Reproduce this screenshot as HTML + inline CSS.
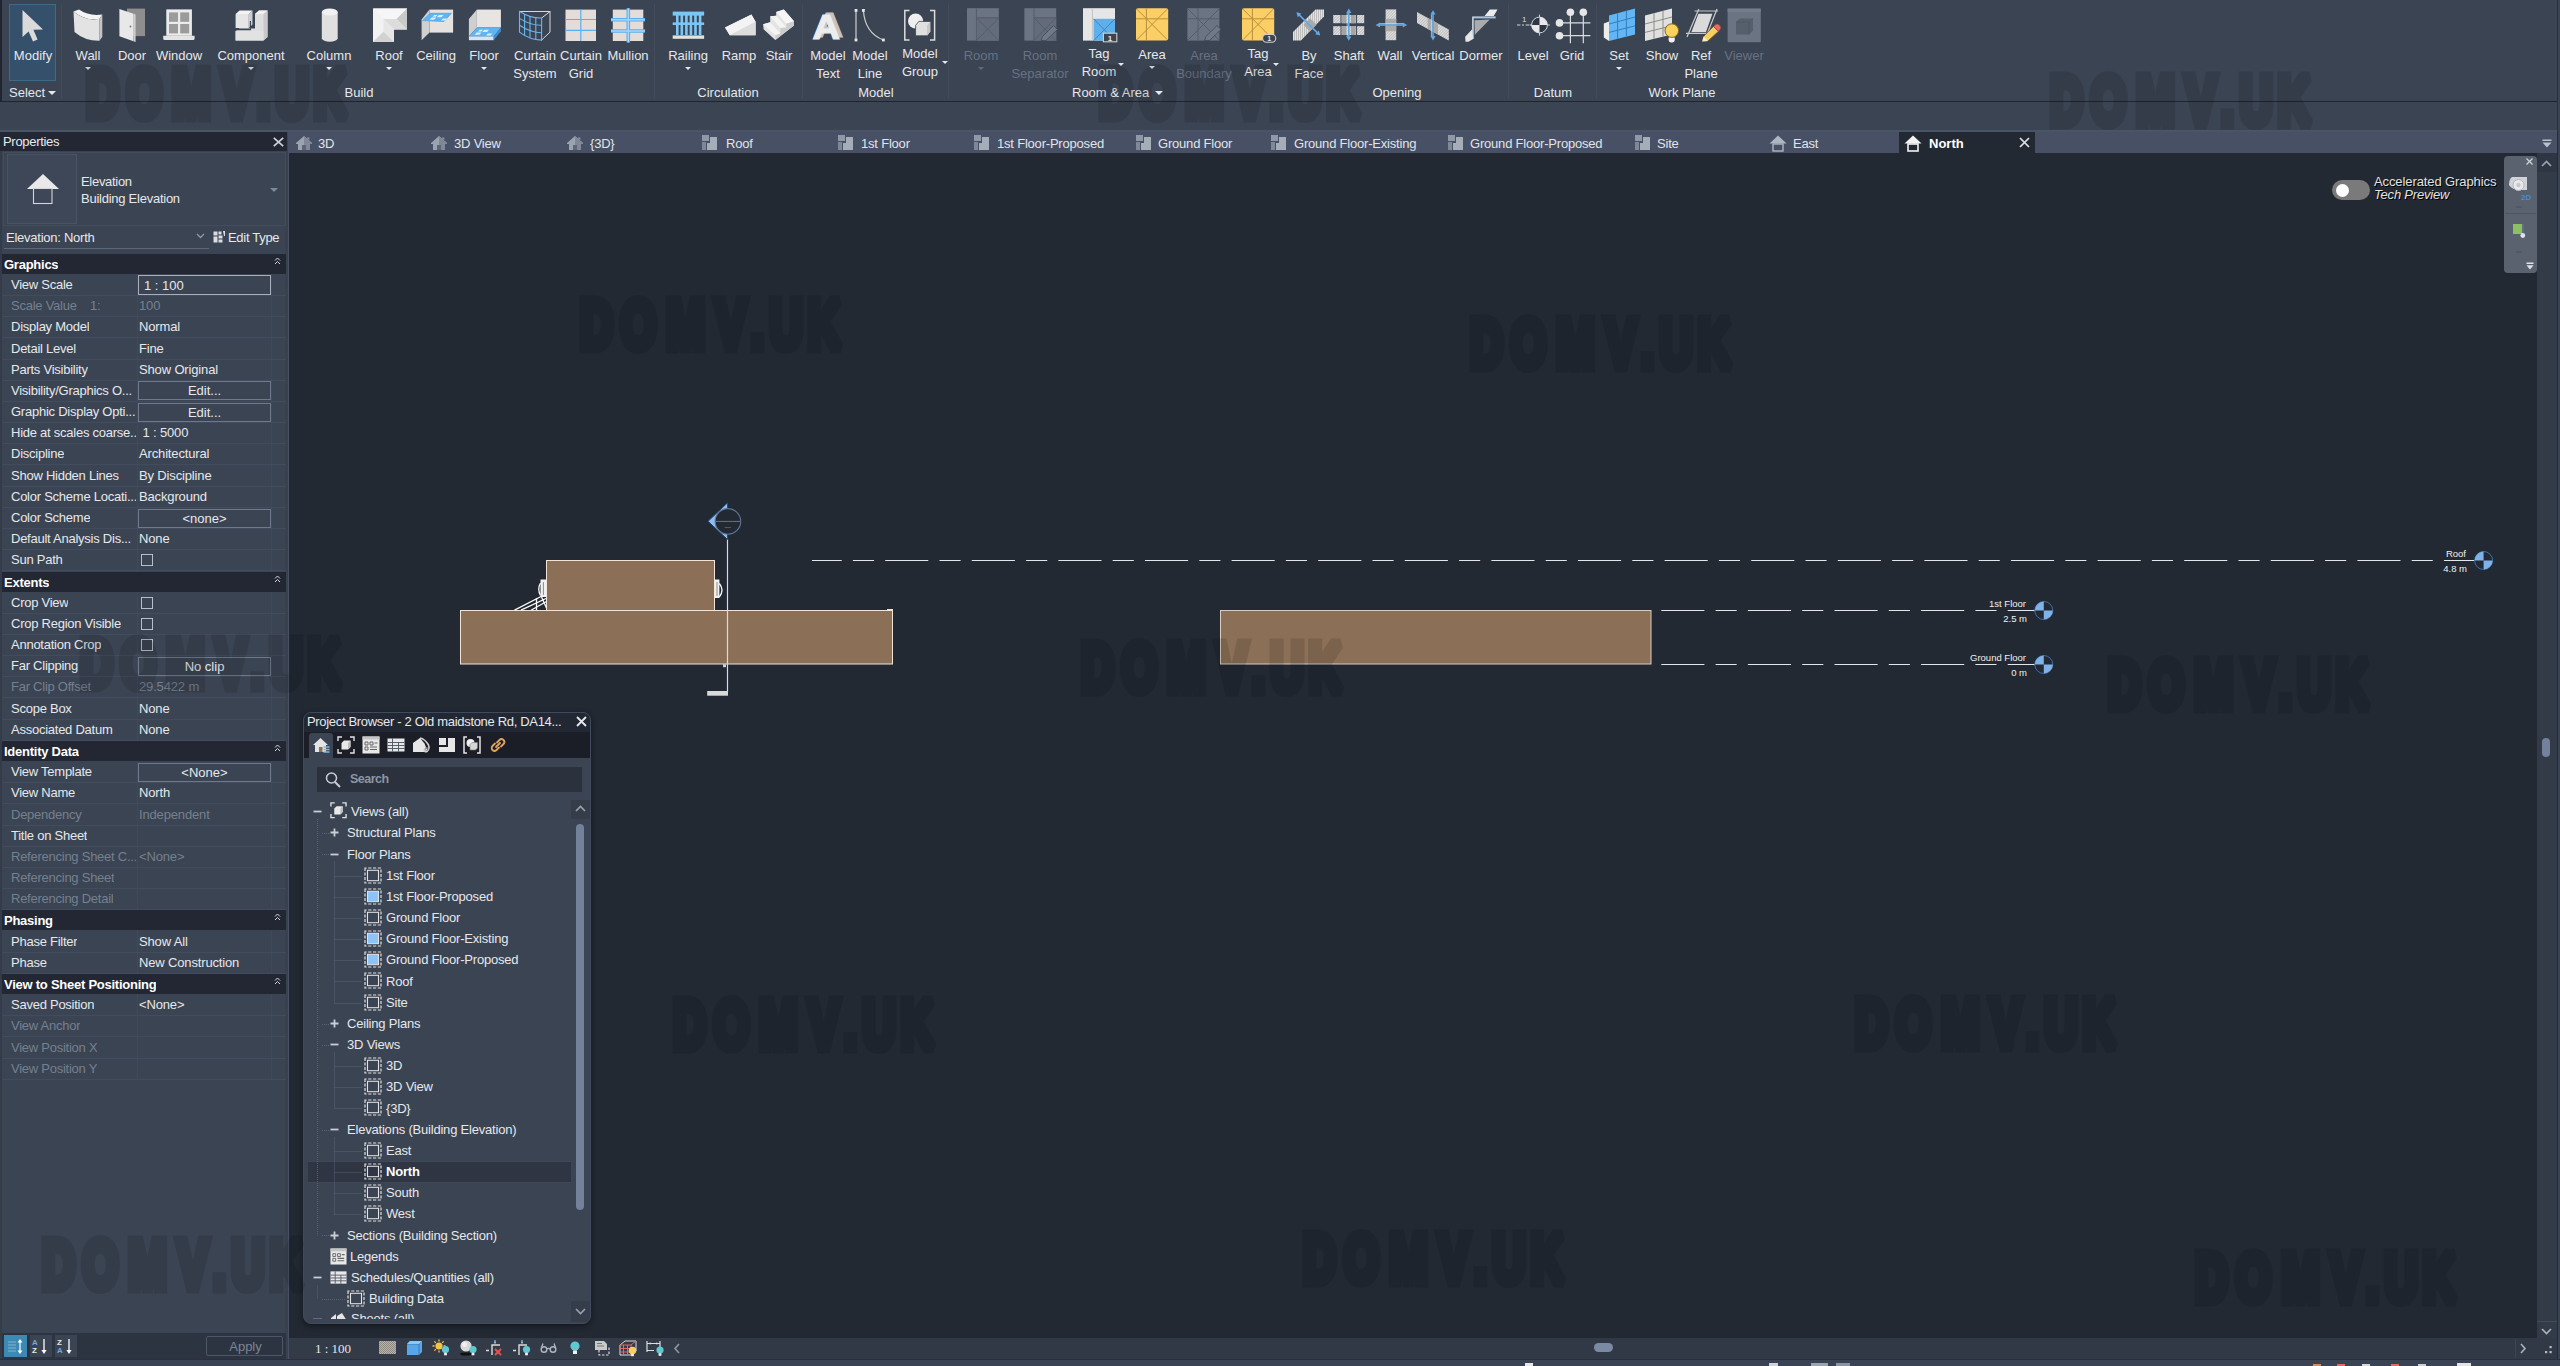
<!DOCTYPE html><html><head><meta charset="utf-8"><title>Revit</title><style>
*{box-sizing:border-box;margin:0;padding:0}
html,body{width:2560px;height:1366px;overflow:hidden;background:#3b4453;font-family:"Liberation Sans","DejaVu Sans",sans-serif;font-size:13px;color:#e6e8ec}
.a{position:absolute}
.t{position:absolute;white-space:nowrap;line-height:18px}
.c{text-align:center}
.dis{color:#75808f}
.rdis{color:#667283}
.wm{position:absolute;font-family:"Liberation Sans","DejaVu Sans",sans-serif;font-weight:700;font-size:60px;line-height:60px;color:rgba(10,12,20,0.17);-webkit-text-stroke:5px rgba(10,12,20,0.0);white-space:nowrap;transform-origin:0 0;letter-spacing:0px;pointer-events:none}
.row{position:absolute;left:2px;width:284px;height:21px}
.hd{position:absolute;left:2px;width:284px;background:#222733;font-weight:700;color:#fff}
.lbl{position:absolute;left:11px;white-space:nowrap;line-height:20px;letter-spacing:-0.25px;max-width:125px;overflow:hidden}
.val{position:absolute;left:139px;white-space:nowrap;line-height:20px;letter-spacing:-0.15px}
.btn{position:absolute;left:138px;width:133px;height:19px;border:1px solid #6e7a8c;text-align:center;line-height:18px}
.cb{position:absolute;left:141px;width:12px;height:12px;border:1px solid #b8bec8}
.tr{position:absolute;white-space:nowrap;line-height:20px}
</style></head><body>
<div class="a" style="left:0;top:0;width:2560px;height:1366px;background:#3b4453"></div>
<div class="a" style="left:0;top:0;width:2px;height:102px;background:#20252f"></div>
<div class="a" style="left:0;top:101px;width:2557px;height:1px;background:#1f242e"></div>
<div class="a" style="left:2557px;top:0;width:1px;height:132px;background:#2a303b"></div>
<div class="a" style="left:0;top:130px;width:2557px;height:2px;background:#4a5468"></div>
<div class="a" style="left:289px;top:132px;width:2268px;height:21px;background:#475065"></div>
<div class="a" style="left:289px;top:153px;width:2256px;height:1185px;background:#222933"></div>
<div class="a" style="left:285px;top:151px;width:4px;height:1209px;background:#39414f"></div><div class="a" style="left:288px;top:132px;width:1px;height:1228px;background:#485164"></div>
<div class="a" style="left:9px;top:4px;width:47px;height:77px;background:#34506a;border:1px solid #3d6a84"></div>
<div class="a" style="left:61px;top:4px;width:1px;height:94px;background:#434c5d"></div>
<div class="a" style="left:654px;top:4px;width:1px;height:94px;background:#434c5d"></div>
<div class="a" style="left:802px;top:4px;width:1px;height:94px;background:#434c5d"></div>
<div class="a" style="left:948px;top:4px;width:1px;height:94px;background:#434c5d"></div>
<div class="a" style="left:1508px;top:4px;width:1px;height:94px;background:#434c5d"></div>
<div class="a" style="left:1596px;top:4px;width:1px;height:94px;background:#434c5d"></div>
<svg class="a" style="left:13px;top:4px;overflow:visible" width="40" height="42" viewBox="13 4 40 42"><path d="M22.5 10V37L28.6 31.4L33 41.6L37.6 39.6L33.4 29.8L43 29.4Z" fill="#dadada"/></svg>
<div class="t c" style="left:-37px;top:47px;width:140px">Modify</div>
<svg class="a" style="left:68px;top:4px;overflow:visible" width="40" height="42" viewBox="68 4 40 42"><path d="M73.5 11.5L79 9.5Q89 16.5 102.3 14.5L99.5 18.8Q86 21.5 73.5 11.5Z" fill="#f4f4f4"/><path d="M73.5 11.5Q86 21.8 99.5 18.8V40.8Q85 41 74.5 32Z" fill="#e3e3e3"/><path d="M99.5 18.8L102.3 14.5V36.8L99.5 40.8Z" fill="#c4c4c4"/></svg>
<div class="t c" style="left:18px;top:47px;width:140px">Wall</div>
<svg class="a" style="left:85.0px;top:67.0px" width="6" height="3" viewBox="0 0 6 3"><path d="M0 0H6L3.0 3Z" fill="#e6e8ec"/></svg>
<svg class="a" style="left:112px;top:4px;overflow:visible" width="40" height="42" viewBox="112 4 40 42"><rect x="127" y="8.6" width="18" height="27.5" fill="#8e8e8e"/><path d="M119.4 9L133.5 13.8V41.2L119.4 36.2Z" fill="#e8e8e8"/><path d="M133.5 13.8L135.6 14.4V42L133.5 41.2Z" fill="#cfcfcf"/><circle cx="130.5" cy="26.5" r="0.9" fill="#777"/></svg>
<div class="t c" style="left:62px;top:47px;width:140px">Door</div>
<svg class="a" style="left:159px;top:4px;overflow:visible" width="40" height="42" viewBox="159 4 40 42"><rect x="166.3" y="9.4" width="25.6" height="26.4" fill="#ebebeb"/><rect x="169" y="12.4" width="9" height="9.4" fill="#9b9b9b"/><rect x="180.2" y="12.4" width="9" height="9.4" fill="#9b9b9b"/><rect x="169" y="24" width="9" height="9.4" fill="#9b9b9b"/><rect x="180.2" y="24" width="9" height="9.4" fill="#9b9b9b"/><path d="M163.2 35.8H194.6V38.5Q194.6 40 193 40H164.8Q163.2 40 163.2 38.5Z" fill="#e4e4e4"/></svg>
<div class="t c" style="left:109px;top:47px;width:140px">Window</div>
<svg class="a" style="left:231px;top:4px;overflow:visible" width="40" height="42" viewBox="231 4 40 42"><path d="M255 14L259 10.6H267.5V37L263.5 40.5H235.6V31L239.5 28.5H255Z" fill="#dedede"/><path d="M255 14L259 10.6H267.5L263.5 14Z" fill="#f1f1f1"/><path d="M263.5 14L267.5 10.6V37L263.5 40.5Z" fill="#c9c9c9"/><path d="M235.6 31H263.5V40.5H235.6Z" fill="#e2e2e2"/><path d="M235.6 14L239.6 10.6H252.5L248.8 14Z" fill="#f3f3f3"/><rect x="235.6" y="14" width="13.2" height="14" fill="#e6e6e6"/><path d="M248.8 14L252.5 10.6V24.6L248.8 28Z" fill="#cdcdcd"/><path d="M236 29.6H250.4V21" fill="none" stroke="#3b4453" stroke-width="1.1"/></svg>
<div class="t c" style="left:181px;top:47px;width:140px">Component</div>
<svg class="a" style="left:248.0px;top:67.0px" width="6" height="3" viewBox="0 0 6 3"><path d="M0 0H6L3.0 3Z" fill="#e6e8ec"/></svg>
<svg class="a" style="left:309px;top:4px;overflow:visible" width="40" height="42" viewBox="309 4 40 42"><path d="M321.8 12V38.5A8 3.7 0 0 0 337.7 38.5V12Z" fill="#e0e0e0"/><ellipse cx="329.75" cy="12" rx="7.95" ry="3.6" fill="#f1f1f1"/></svg>
<div class="t c" style="left:259px;top:47px;width:140px">Column</div>
<svg class="a" style="left:326.0px;top:67.0px" width="6" height="3" viewBox="0 0 6 3"><path d="M0 0H6L3.0 3Z" fill="#e6e8ec"/></svg>
<svg class="a" style="left:369px;top:4px;overflow:visible" width="40" height="42" viewBox="369 4 40 42"><path d="M373 8.5H407V29.5H394V42H373Z" fill="#f2f2f2"/><path d="M373 8.5L383.5 19H407V8.5Z" fill="#f6f6f6"/><path d="M407 8.5L396.5 19L407 29.5Z" fill="#c9c9c9"/><path d="M396.5 19H383.5L394 29.5H407Z" fill="#dcdcdc"/><path d="M383.5 19L394 29.5V42L383.5 31.5Z" fill="#e6e6e6"/><path d="M373 42L383.5 31.5L394 42Z" fill="#d2d2d2"/></svg>
<div class="t c" style="left:319px;top:47px;width:140px">Roof</div>
<svg class="a" style="left:386.0px;top:67.0px" width="6" height="3" viewBox="0 0 6 3"><path d="M0 0H6L3.0 3Z" fill="#e6e8ec"/></svg>
<svg class="a" style="left:416px;top:4px;overflow:visible" width="40" height="42" viewBox="416 4 40 42"><rect x="429.5" y="9.600" width="23.600" height="23" fill="#e6e2e0"/><path d="M421.600 19.500L429.500 9.600V32.600L421.600 40.200Z" fill="#d0d0d0"/><path d="M422.600 20.600L430.200 13.300H451.400L444 21.500Z" fill="#5fb4f2"/><path d="M422.600 20.600L430.200 13.300H451.400L444 21.500Z" fill="none" stroke="#4a9fe0" stroke-width=".7"/><path d="M429.500 19.800L431.800 17.600H436.200L434 19.800ZM436.800 17.200L439 15H443.600L441.400 17.200ZM441 20.400L443 18.400H447.200L445.200 20.400ZM432.500 16.800L434.300 15H437.500L435.700 16.800Z" fill="#d9efff"/></svg>
<div class="t c" style="left:366px;top:47px;width:140px">Ceiling</div>
<svg class="a" style="left:464px;top:4px;overflow:visible" width="40" height="42" viewBox="464 4 40 42"><rect x="476.900" y="9.600" width="24" height="17.900" fill="#e8e4e2"/><path d="M468.900 19L476.900 9.600V27.500L468.900 36.400Z" fill="#cfcfcf"/><path d="M468.900 36.400L476.900 27.500H500.900L493.700 36.400Z" fill="#5fb4f2"/><path d="M468.900 36.400H493.700V40.200H468.900Z" fill="#cfe6fa"/><path d="M493.700 36.400L500.900 27.500V31.300L493.700 40.200Z" fill="#3b8fd4"/><path d="M474.500 34.800L476.700 32.400H481.500L479.300 34.800ZM482.300 32L484.300 29.800H489L487 32ZM486 35.400L487.800 33.400H492.400L490.600 35.400ZM478 31.600L479.600 29.800H483L481.400 31.600Z" fill="#d9efff"/></svg>
<div class="t c" style="left:414px;top:47px;width:140px">Floor</div>
<svg class="a" style="left:481.0px;top:67.0px" width="6" height="3" viewBox="0 0 6 3"><path d="M0 0H6L3.0 3Z" fill="#e6e8ec"/></svg>
<svg class="a" style="left:515px;top:4px;overflow:visible" width="40" height="42" viewBox="515 4 40 42"><g fill="none" stroke="#d9d9d9" stroke-width="1"><path d="M519.500 11.500H550L541.600 18M550 11V32.100L541.600 40.100"/></g><g fill="none" stroke="#6ab6ee" stroke-width="1.100"><path d="M519.500 11.500Q531 18.500 541.600 18V40.100Q530 40 519.500 32.100Z"/><path d="M519.500 18.400Q531 25.600 541.600 25.300M519.500 25.200Q531 32.800 541.600 32.700"/><path d="M524.600 14V35.300M530 16V37.800M535.800 17.300V39.400"/></g></svg>
<div class="t c" style="left:465px;top:47px;width:140px">Curtain</div>
<div class="t c" style="left:465px;top:65px;width:140px">System</div>
<svg class="a" style="left:561px;top:4px;overflow:visible" width="40" height="42" viewBox="561 4 40 42"><rect x="565.500" y="9.600" width="30.500" height="31.400" fill="#e3dcd9"/><path d="M565.500 19.500H596M565.500 30.300H596M580.800 9.600V41" stroke="#58b0f2" stroke-width="1.200"/></svg>
<div class="t c" style="left:511px;top:47px;width:140px">Curtain</div>
<div class="t c" style="left:511px;top:65px;width:140px">Grid</div>
<svg class="a" style="left:608px;top:4px;overflow:visible" width="40" height="42" viewBox="608 4 40 42"><rect x="612.800" y="9.600" width="30.500" height="31.400" fill="#e3dcd9"/><path d="M611 19.700H645M611 31H645M628.300 8.200V42.400" stroke="#58b0f2" stroke-width="3.600"/><path d="M611 19.700H645M611 31H645M628.300 8.200V42.400" stroke="#a9d6f8" stroke-width="1.400"/></svg>
<div class="t c" style="left:558px;top:47px;width:140px">Mullion</div>
<svg class="a" style="left:668px;top:4px;overflow:visible" width="40" height="42" viewBox="668 4 40 42"><rect x="672.7" y="11.6" width="31.4" height="4" fill="#7cc6f6"/><rect x="672.7" y="22.4" width="31.4" height="2.6" fill="#7cc6f6"/><rect x="676.0" y="15" width="2.6" height="20" fill="#7cc6f6"/><rect x="680.5" y="15" width="2.6" height="20" fill="#7cc6f6"/><rect x="685.1" y="15" width="2.6" height="20" fill="#7cc6f6"/><rect x="689.6" y="15" width="2.6" height="20" fill="#7cc6f6"/><rect x="694.2" y="15" width="2.6" height="20" fill="#7cc6f6"/><rect x="698.8" y="15" width="2.6" height="20" fill="#7cc6f6"/><rect x="672.7" y="35.4" width="31.4" height="3.4" fill="#e2e2e2"/></svg>
<div class="t c" style="left:618px;top:47px;width:140px">Railing</div>
<svg class="a" style="left:685.0px;top:67.0px" width="6" height="3" viewBox="0 0 6 3"><path d="M0 0H6L3.0 3Z" fill="#e6e8ec"/></svg>
<svg class="a" style="left:719px;top:4px;overflow:visible" width="40" height="42" viewBox="719 4 40 42"><path d="M725 27.5L751.4 14.6L755.6 21.7V35.2H729.8Z" fill="#e4e4e4"/><path d="M725 27.5L751.4 14.6L755.6 21.7L729.8 35.2Z" fill="#f3f3f3"/><path d="M729.8 35.2L755.6 21.7V35.2Z" fill="#dcdcdc"/></svg>
<div class="t c" style="left:669px;top:47px;width:140px">Ramp</div>
<svg class="a" style="left:759px;top:4px;overflow:visible" width="40" height="42" viewBox="759 4 40 42"><path d="M763.100 24.200L770.200 22.300V16.200L776.200 15.700V12L783.800 9.600L794 21.300V25.600L775.300 40.100L763.600 29.300Z" fill="#e4e4e4"/><path d="M776.200 12L783.800 9.600L794 21.300L786.400 23.700Z" fill="#f6f6f6"/><path d="M770.200 16.200L776.200 15.700L786.400 27.400L780.400 27.900Z" fill="#f4f4f4"/><path d="M763.100 24.200L770.200 22.300L780.400 33.600L775.300 35.300Z" fill="#f4f4f4"/><path d="M794 21.300V25.600L775.300 40.100V35.300L780.400 33.600V27.900L786.400 27.400V23.700Z" fill="#cdcdcd"/></svg>
<div class="t c" style="left:709px;top:47px;width:140px">Stair</div>
<svg class="a" style="left:808px;top:4px;overflow:visible" width="40" height="42" viewBox="808 4 40 42"><text x="0" y="0" font-family="Liberation Sans, sans-serif" font-weight="700" font-size="34.500" text-anchor="middle" fill="#c4c4c4" stroke="#c4c4c4" stroke-width="1.200" transform="translate(829.400 37.200) scale(1.1 1)">A</text><text x="0" y="0" font-family="Liberation Sans, sans-serif" font-weight="700" font-size="34.500" text-anchor="middle" fill="#ededed" stroke="#ededed" stroke-width="1.200" transform="translate(826.200 38.700) scale(1.1 1)">A</text></svg>
<div class="t c" style="left:758px;top:47px;width:140px">Model</div>
<div class="t c" style="left:758px;top:65px;width:140px">Text</div>
<svg class="a" style="left:850px;top:4px;overflow:visible" width="40" height="42" viewBox="850 4 40 42"><path d="M856 10.5V40M863.4 10.5Q865 33 883.4 40" fill="none" stroke="#cfcfcf" stroke-width="1.2"/><rect x="854.6" y="9" width="2.8" height="2.8" fill="#e6e6e6"/><rect x="854.6" y="38.6" width="2.8" height="2.8" fill="#e6e6e6"/><rect x="862" y="9" width="2.8" height="2.8" fill="#e6e6e6"/><rect x="882" y="38.6" width="2.8" height="2.8" fill="#e6e6e6"/></svg>
<div class="t c" style="left:800px;top:47px;width:140px">Model</div>
<div class="t c" style="left:800px;top:65px;width:140px">Line</div>
<svg class="a" style="left:900px;top:4px;overflow:visible" width="40" height="42" viewBox="900 4 40 42"><path d="M909.5 10.6H904.8V40H909.5M930 10.6H934.6V40H930" fill="none" stroke="#dcdcdc" stroke-width="1.5"/><circle cx="915.6" cy="21" r="7.6" fill="#efefef"/><path d="M915.6 25.4L918.8 21.4H930.4V31.8L927 35.8H915.6Z" fill="#e0e0e0" stroke="#3b4453" stroke-width=".8"/><path d="M927 25.4L930.4 21.4V31.8L927 35.8Z" fill="#c8c8c8"/></svg>
<div class="t c" style="left:850px;top:45px;width:140px">Model</div>
<div class="t c" style="left:850px;top:63px;width:140px">Group</div>
<svg class="a" style="left:942.0px;top:60.5px" width="6" height="3" viewBox="0 0 6 3"><path d="M0 0H6L3.0 3Z" fill="#e6e8ec"/></svg>
<svg class="a" style="left:961px;top:4px;overflow:visible" width="40" height="42" viewBox="961 4 40 42"><rect x="967" y="8.2" width="31.8" height="32.4" fill="#6a7483"/><rect x="976.4" y="17.8" width="22.4" height="22.8" fill="#636c7a"/><path d="M976.4 17.8L998.8 40.6M998.8 17.8L976.4 40.6M976.4 8.2V40.6M976.4 17.8H998.8" stroke="#545d6b" stroke-width="1" fill="none"/></svg>
<div class="t c rdis" style="left:911px;top:47px;width:140px">Room</div>
<svg class="a" style="left:978.0px;top:67.0px" width="6" height="3" viewBox="0 0 6 3"><path d="M0 0H6L3.0 3Z" fill="#5f6b7c"/></svg>
<svg class="a" style="left:1020px;top:4px;overflow:visible" width="40" height="42" viewBox="1020 4 40 42"><rect x="1024.4" y="8.2" width="31.8" height="32.4" fill="#6a7483"/><rect x="1034" y="17.8" width="22.2" height="22.8" fill="#636c7a"/><path d="M1034 17.8L1056 40.6M1056 17.8L1034 40.6M1034 8.2V40.6M1034 17.8H1056" stroke="#545d6b" stroke-width="1" fill="none"/><path d="M1041 40.5L1042.5 36.5L1053.5 25.5L1057.5 29.5L1046 40.5Z" fill="#6f7988" stroke="#3b4453" stroke-width=".7"/></svg>
<div class="t c rdis" style="left:970px;top:47px;width:140px">Room</div>
<div class="t c rdis" style="left:970px;top:65px;width:140px">Separator</div>
<svg class="a" style="left:1079px;top:4px;overflow:visible" width="40" height="42" viewBox="1079 4 40 42"><rect x="1083" y="8.2" width="32" height="32.4" fill="#e6e6e6"/><rect x="1093.6" y="18.8" width="21.4" height="21.8" fill="#5db0ec"/><path d="M1092.4 8.2V40.6" stroke="#c2c2c2" stroke-width="1"/><path d="M1093.6 18.8L1115 40.6M1115 18.8L1093.6 40.6" stroke="#3f86bf" stroke-width="1" fill="none"/><rect x="1103.4" y="33.2" width="13.4" height="8.6" fill="#3b4453" stroke="#cfcfcf" stroke-width="1.1"/><text x="1110.1" y="40.8" font-family="Liberation Sans, sans-serif" font-weight="700" font-size="8" text-anchor="middle" fill="#e6e6e6">1</text></svg>
<div class="t c" style="left:1029px;top:45px;width:140px">Tag</div>
<div class="t c" style="left:1029px;top:63px;width:140px">Room</div>
<svg class="a" style="left:1118.0px;top:62.5px" width="6" height="3" viewBox="0 0 6 3"><path d="M0 0H6L3.0 3Z" fill="#e6e8ec"/></svg>
<svg class="a" style="left:1132px;top:4px;overflow:visible" width="40" height="42" viewBox="1132 4 40 42"><rect x="1136" y="8.2" width="32.2" height="32.4" rx="2" fill="#fcce66"/><path d="M1137 9.2L1167.2 39.6M1167.2 9.2L1137 39.6M1146.4 8.2V40.6M1136 18.8H1168.2" stroke="#b8903c" stroke-width="1" fill="none"/></svg>
<div class="t c" style="left:1082px;top:46px;width:140px">Area</div>
<svg class="a" style="left:1149.0px;top:66.0px" width="6" height="3" viewBox="0 0 6 3"><path d="M0 0H6L3.0 3Z" fill="#e6e8ec"/></svg>
<svg class="a" style="left:1184px;top:4px;overflow:visible" width="40" height="42" viewBox="1184 4 40 42"><rect x="1187.4" y="8.2" width="32" height="32.4" fill="#6a7483"/><path d="M1188 9L1219 40M1219 9L1188 40M1198 8.2V40.6M1187.4 18.8H1219.4" stroke="#545d6b" stroke-width="1" fill="none"/><path d="M1204.5 40.5L1206 36.5L1217 25.5L1221 29.5L1209.5 40.5Z" fill="#6f7988" stroke="#3b4453" stroke-width=".7"/></svg>
<div class="t c rdis" style="left:1134px;top:47px;width:140px">Area</div>
<div class="t c rdis" style="left:1134px;top:65px;width:140px">Boundary</div>
<svg class="a" style="left:1238px;top:4px;overflow:visible" width="40" height="42" viewBox="1238 4 40 42"><rect x="1242" y="8.2" width="32.2" height="32.4" rx="2" fill="#fcce66"/><path d="M1243 9.2L1273.2 39.6M1273.2 9.2L1243 39.6M1252.4 8.2V40.6M1242 18.8H1274.2" stroke="#b8903c" stroke-width="1" fill="none"/><rect x="1262.6" y="34.4" width="13.2" height="7.8" rx="3.9" fill="#3b4453" stroke="#cfcfcf" stroke-width="1.1"/><text x="1269.2" y="41" font-family="Liberation Sans, sans-serif" font-weight="700" font-size="7" text-anchor="middle" fill="#e6e6e6">1</text></svg>
<div class="t c" style="left:1188px;top:45px;width:140px">Tag</div>
<div class="t c" style="left:1188px;top:63px;width:140px">Area</div>
<svg class="a" style="left:1273.0px;top:62.5px" width="6" height="3" viewBox="0 0 6 3"><path d="M0 0H6L3.0 3Z" fill="#e6e8ec"/></svg>
<svg class="a" style="left:1289px;top:4px;overflow:visible" width="40" height="42" viewBox="1289 4 40 42"><defs><pattern id="h1" width="2" height="2" patternUnits="userSpaceOnUse" patternTransform="rotate(0)"><rect width="2" height="2" fill="#e2e2e2"/><rect width="1" height="2" fill="#bdbdbd"/></pattern></defs><path d="M1293 32L1315.5 9.4H1324V16.5L1301 40.6H1293Z" fill="url(#h1)"/><path d="M1303.5 21.5L1310 15L1316.6 21.6L1310 28.2Z" fill="#a9a9a9" transform="translate(0 3.2)"/><path d="M1297.6 13.4L1319 34.4" stroke="#62a8e4" stroke-width="1.6"/><path d="M1296.4 12.2L1301.4 13.6L1297.8 17.2ZM1320.2 35.6L1315.2 34.2L1318.8 30.6Z" fill="#62a8e4"/></svg>
<div class="t c" style="left:1239px;top:47px;width:140px">By</div>
<div class="t c" style="left:1239px;top:65px;width:140px">Face</div>
<svg class="a" style="left:1329px;top:4px;overflow:visible" width="40" height="42" viewBox="1329 4 40 42"><defs><pattern id="h2" width="2" height="2" patternUnits="userSpaceOnUse" patternTransform="rotate(45)"><rect width="2" height="2" fill="#e2e2e2"/><rect width="1" height="2" fill="#bdbdbd"/></pattern></defs><rect x="1333.2" y="15" width="31" height="8.2" fill="url(#h2)"/><rect x="1333.2" y="26.2" width="31" height="8.8" fill="url(#h2)"/><rect x="1342" y="15" width="4.6" height="8.2" fill="#a4a4a4"/><rect x="1351" y="15" width="4.6" height="8.2" fill="#a4a4a4"/><rect x="1342" y="26.2" width="4.6" height="8.8" fill="#a4a4a4"/><rect x="1351" y="26.2" width="4.6" height="8.8" fill="#a4a4a4"/><path d="M1341 15V35M1356.6 15V35" stroke="#3b4453" stroke-width="1"/><path d="M1348.8 11V38.6" stroke="#62a8e4" stroke-width="1.6"/><path d="M1348.8 8.6L1351.4 13H1346.2ZM1348.8 40.8L1351.4 36.4H1346.2Z" fill="#62a8e4"/><path d="M1347.2 13V36.6" stroke="#cfe6f8" stroke-width=".7"/></svg>
<div class="t c" style="left:1279px;top:47px;width:140px">Shaft</div>
<svg class="a" style="left:1370px;top:4px;overflow:visible" width="40" height="42" viewBox="1370 4 40 42"><defs><pattern id="h3" width="2" height="2" patternUnits="userSpaceOnUse" patternTransform="rotate(45)"><rect width="2" height="2" fill="#e2e2e2"/><rect width="1" height="2" fill="#bdbdbd"/></pattern></defs><rect x="1385.6" y="9.4" width="10.6" height="30.8" fill="url(#h3)"/><rect x="1385.6" y="18.8" width="10.6" height="12.4" fill="#a9a9a9"/><path d="M1378 25H1405" stroke="#62a8e4" stroke-width="1.6"/><path d="M1375.6 25L1380 22.4V27.6ZM1407.2 25L1402.8 22.4V27.6Z" fill="#62a8e4"/><path d="M1380 23.6H1403" stroke="#cfe6f8" stroke-width=".7"/></svg>
<div class="t c" style="left:1320px;top:47px;width:140px">Wall</div>
<svg class="a" style="left:1413px;top:4px;overflow:visible" width="40" height="42" viewBox="1413 4 40 42"><defs><pattern id="h4" width="2" height="2" patternUnits="userSpaceOnUse" patternTransform="rotate(45)"><rect width="2" height="2" fill="#e2e2e2"/><rect width="1" height="2" fill="#bdbdbd"/></pattern></defs><path d="M1417 12L1448.8 29.5V40.4L1417 23Z" fill="url(#h4)"/><path d="M1427.6 17.8L1438 23.6V34.4L1427.6 28.8Z" fill="#a9a9a9"/><path d="M1433 12.6V38" stroke="#62a8e4" stroke-width="1.6"/><path d="M1433 10.2L1435.6 14.6H1430.4ZM1433 40.4L1435.6 36H1430.4Z" fill="#62a8e4"/><path d="M1431.4 14.6V36" stroke="#cfe6f8" stroke-width=".7"/></svg>
<div class="t c" style="left:1363px;top:47px;width:140px">Vertical</div>
<svg class="a" style="left:1461px;top:4px;overflow:visible" width="40" height="42" viewBox="1461 4 40 42"><defs><pattern id="h5" width="2" height="2" patternUnits="userSpaceOnUse" patternTransform="rotate(45)"><rect width="2" height="2" fill="#e2e2e2"/><rect width="1" height="2" fill="#bdbdbd"/></pattern></defs><path d="M1465.200 36.800L1472 29.500L1473.100 39L1468.400 41.700H1465.500Z" fill="#e6e6e6"/><path d="M1484.600 15.900L1489.800 9.500H1497.500L1493.700 15.900Z" fill="#ececec"/><path d="M1474.500 20.200L1489.800 19.600L1474.800 34.800Z" fill="#a9acad"/><path d="M1473.100 39V17.400H1495.600" fill="none" stroke="#dfe8f2" stroke-width="1.800"/><path d="M1473.600 39V17.900H1495.600" fill="none" stroke="#5a9fda" stroke-width=".8"/></svg>
<div class="t c" style="left:1411px;top:47px;width:140px">Dormer</div>
<svg class="a" style="left:1513px;top:4px;overflow:visible" width="40" height="42" viewBox="1513 4 40 42"><text x="1524.200" y="22" font-family="Liberation Sans, sans-serif" font-size="8" text-anchor="middle" fill="#dcdcdc">1</text><path d="M1517 25H1531" stroke="#d4d4d4" stroke-width="1.100" stroke-dasharray="3.400 1.600 2 1.600"/><path d="M1529.500 25H1549.800M1539.500 14.600V35.600" stroke="#cfd2d6" stroke-width="1"/><circle cx="1539.500" cy="25" r="7.900" fill="#2f3744" stroke="#cfd2d6" stroke-width="1"/><path d="M1539.500 25V17.100A7.900 7.900 0 0 1 1547.400 25ZM1539.500 25V32.900A7.900 7.900 0 0 1 1531.600 25Z" fill="#e8e8ea"/></svg>
<div class="t c" style="left:1463px;top:47px;width:140px">Level</div>
<svg class="a" style="left:1552px;top:4px;overflow:visible" width="40" height="42" viewBox="1552 4 40 42"><path d="M1570.400 12V43.200M1583.300 12V43.200M1559.500 22.900H1590.400M1559.500 35.700H1590.400" stroke="#dcdde0" stroke-width="1.200" fill="none"/><circle cx="1570.400" cy="12.200" r="3.800" fill="#e6e6e8"/><circle cx="1583.300" cy="12.200" r="3.800" fill="#e6e6e8"/><circle cx="1559.500" cy="22.900" r="3.800" fill="#e6e6e8"/><circle cx="1559.500" cy="35.700" r="3.800" fill="#e6e6e8"/></svg>
<div class="t c" style="left:1502px;top:47px;width:140px">Grid</div>
<svg class="a" style="left:1599px;top:4px;overflow:visible" width="40" height="42" viewBox="1599 4 40 42"><path d="M1603.8 23.4L1609 21.4V41L1603.8 37.6Z" fill="#ececec"/><path d="M1609 15.6L1635 8.4V34.4L1609 41Z" fill="#62b6f4"/><path d="M1609 24L1635 17M1609 32.4L1635 25.8M1617.6 13.2V38.8M1626.4 10.8V36.6" stroke="#2f7fc0" stroke-width="1" fill="none"/></svg>
<div class="t c" style="left:1549px;top:47px;width:140px">Set</div>
<svg class="a" style="left:1616.0px;top:67.0px" width="6" height="3" viewBox="0 0 6 3"><path d="M0 0H6L3.0 3Z" fill="#e6e8ec"/></svg>
<svg class="a" style="left:1642px;top:4px;overflow:visible" width="40" height="42" viewBox="1642 4 40 42"><path d="M1645 15.6L1672 8.4V34.4L1645 41Z" fill="#e0e0e0"/><path d="M1645 24L1672 17M1645 32.4L1672 25.8M1654 13.2V38.8M1663 10.8V36.6" stroke="#8c8c84" stroke-width="1" fill="none"/><rect x="1668.6" y="36" width="6.2" height="6.4" rx="2.4" fill="#f2f2f2"/><circle cx="1671.8" cy="30.6" r="6.8" fill="#fcd25e" stroke="#7d6224" stroke-width="1"/></svg>
<div class="t c" style="left:1592px;top:47px;width:140px">Show</div>
<svg class="a" style="left:1681px;top:4px;overflow:visible" width="40" height="42" viewBox="1681 4 40 42"><path d="M1691.4 32L1698.4 13.8H1712.4L1706 32Z" fill="#dadada"/><path d="M1686 33.4H1708M1694.6 11H1718M1687 37L1698.8 9M1706 37L1717 9" stroke="#c9c9c9" stroke-width="1.2" fill="none"/><path d="M1702.2 41.6L1703.6 36.4L1713.4 26.4L1718.4 31.4L1708 41Z" fill="#f6cf62" stroke="#6a5320" stroke-width=".8"/><path d="M1713.4 26.4L1714.6 25.2A3.5 3.5 0 0 1 1719.6 30.2L1718.4 31.4Z" fill="#ee6470" stroke="#6a5320" stroke-width=".6"/><path d="M1702.2 41.6L1703.6 36.4L1708 41Z" fill="#f2ece0"/></svg>
<div class="t c" style="left:1631px;top:47px;width:140px">Ref</div>
<div class="t c" style="left:1631px;top:65px;width:140px">Plane</div>
<svg class="a" style="left:1724px;top:4px;overflow:visible" width="40" height="42" viewBox="1724 4 40 42"><rect x="1727.6" y="8.6" width="33.2" height="33.6" fill="#6a7483"/><rect x="1727.6" y="8.6" width="33.2" height="3.4" fill="#727c8b"/><path d="M1736 22L1740 18.6H1753V30.6L1749 34.6H1736Z" fill="#565f6c"/><path d="M1736 22H1749V34.6M1749 22L1753 18.6" stroke="#4c5561" stroke-width=".8" fill="none"/></svg>
<div class="t c rdis" style="left:1674px;top:47px;width:140px">Viewer</div>
<div class="t c" style="left:289px;top:84px;width:140px">Build</div>
<div class="t c" style="left:658px;top:84px;width:140px">Circulation</div>
<div class="t c" style="left:806px;top:84px;width:140px">Model</div>
<div class="t c" style="left:1327px;top:84px;width:140px">Opening</div>
<div class="t c" style="left:1483px;top:84px;width:140px">Datum</div>
<div class="t c" style="left:1612px;top:84px;width:140px">Work Plane</div>
<div class="t" style="left:9px;top:84px">Select</div>
<svg class="a" style="left:47.5px;top:90.5px" width="8" height="4" viewBox="0 0 8 4"><path d="M0 0H8L4.0 4Z" fill="#e6e8ec"/></svg>
<div class="t" style="left:1072px;top:84px">Room &amp; Area</div>
<svg class="a" style="left:1154.5px;top:90.5px" width="8" height="4" viewBox="0 0 8 4"><path d="M0 0H8L4.0 4Z" fill="#e6e8ec"/></svg>
<svg class="a" style="left:295px;top:134px" width="18" height="18" viewBox="0 0 18 18"><path d="M1 9L9 2L17 9V10H15V16H3V10H1Z" fill="#9aa3b0"/><path d="M9 2L17 9V10H15V16H9Z" fill="#7f8896"/><rect x="7" y="11" width="4" height="5" fill="#5d6675"/><path d="M12 3.5h2.4V6L12 4.4Z" fill="#8a93a0"/></svg>
<div class="t" style="left:318px;top:135px;color:#e1e4e9;letter-spacing:-0.2px">3D</div>
<svg class="a" style="left:430px;top:134px" width="18" height="18" viewBox="0 0 18 18"><path d="M1 9L9 2L17 9V10H15V16H3V10H1Z" fill="#9aa3b0"/><path d="M9 2L17 9V10H15V16H9Z" fill="#7f8896"/><rect x="7" y="11" width="4" height="5" fill="#5d6675"/><path d="M12 3.5h2.4V6L12 4.4Z" fill="#8a93a0"/></svg>
<div class="t" style="left:454px;top:135px;color:#e1e4e9;letter-spacing:-0.2px">3D View</div>
<svg class="a" style="left:566px;top:134px" width="18" height="18" viewBox="0 0 18 18"><path d="M1 9L9 2L17 9V10H15V16H3V10H1Z" fill="#9aa3b0"/><path d="M9 2L17 9V10H15V16H9Z" fill="#7f8896"/><rect x="7" y="11" width="4" height="5" fill="#5d6675"/><path d="M12 3.5h2.4V6L12 4.4Z" fill="#8a93a0"/></svg>
<div class="t" style="left:590px;top:135px;color:#e1e4e9;letter-spacing:-0.2px">{3D}</div>
<svg class="a" style="left:701px;top:134px" width="18" height="18" viewBox="0 0 18 18"><path d="M1 1H8V7H1Z" fill="#8f98a6"/><path d="M9 3H16V16H6V9H9Z" fill="#a5adb9"/><path d="M1 8H5V16H1Z" fill="#7f8896"/></svg>
<div class="t" style="left:726px;top:135px;color:#e1e4e9;letter-spacing:-0.2px">Roof</div>
<svg class="a" style="left:837px;top:134px" width="18" height="18" viewBox="0 0 18 18"><path d="M1 1H8V7H1Z" fill="#8f98a6"/><path d="M9 3H16V16H6V9H9Z" fill="#a5adb9"/><path d="M1 8H5V16H1Z" fill="#7f8896"/></svg>
<div class="t" style="left:861px;top:135px;color:#e1e4e9;letter-spacing:-0.2px">1st Floor</div>
<svg class="a" style="left:973px;top:134px" width="18" height="18" viewBox="0 0 18 18"><path d="M1 1H8V7H1Z" fill="#8f98a6"/><path d="M9 3H16V16H6V9H9Z" fill="#a5adb9"/><path d="M1 8H5V16H1Z" fill="#7f8896"/></svg>
<div class="t" style="left:997px;top:135px;color:#e1e4e9;letter-spacing:-0.2px">1st Floor-Proposed</div>
<svg class="a" style="left:1135px;top:134px" width="18" height="18" viewBox="0 0 18 18"><path d="M1 1H8V7H1Z" fill="#8f98a6"/><path d="M9 3H16V16H6V9H9Z" fill="#a5adb9"/><path d="M1 8H5V16H1Z" fill="#7f8896"/></svg>
<div class="t" style="left:1158px;top:135px;color:#e1e4e9;letter-spacing:-0.2px">Ground Floor</div>
<svg class="a" style="left:1270px;top:134px" width="18" height="18" viewBox="0 0 18 18"><path d="M1 1H8V7H1Z" fill="#8f98a6"/><path d="M9 3H16V16H6V9H9Z" fill="#a5adb9"/><path d="M1 8H5V16H1Z" fill="#7f8896"/></svg>
<div class="t" style="left:1294px;top:135px;color:#e1e4e9;letter-spacing:-0.2px">Ground Floor-Existing</div>
<svg class="a" style="left:1447px;top:134px" width="18" height="18" viewBox="0 0 18 18"><path d="M1 1H8V7H1Z" fill="#8f98a6"/><path d="M9 3H16V16H6V9H9Z" fill="#a5adb9"/><path d="M1 8H5V16H1Z" fill="#7f8896"/></svg>
<div class="t" style="left:1470px;top:135px;color:#e1e4e9;letter-spacing:-0.2px">Ground Floor-Proposed</div>
<svg class="a" style="left:1634px;top:134px" width="18" height="18" viewBox="0 0 18 18"><path d="M1 1H8V7H1Z" fill="#8f98a6"/><path d="M9 3H16V16H6V9H9Z" fill="#a5adb9"/><path d="M1 8H5V16H1Z" fill="#7f8896"/></svg>
<div class="t" style="left:1657px;top:135px;color:#e1e4e9;letter-spacing:-0.2px">Site</div>
<svg class="a" style="left:1769px;top:134px" width="18" height="18" viewBox="0 0 18 18"><path d="M0.5 9.5L9 1.5L17.500 9.500H14.5V9.5H3.5Z" fill="#aeb6c1"/><rect x="4" y="10" width="10" height="7" fill="none" stroke="#aeb6c1" stroke-width="1.4"/></svg>
<div class="t" style="left:1793px;top:135px;color:#e1e4e9;letter-spacing:-0.2px">East</div>
<div class="a" style="left:1899px;top:132px;width:136px;height:21px;background:#222933"></div>
<svg class="a" style="left:1904px;top:134px" width="18" height="18" viewBox="0 0 18 18"><path d="M0.5 9.5L9 1.5L17.500 9.500H14.5V9.5H3.5Z" fill="#f2f2f2"/><rect x="4" y="10" width="10" height="7" fill="none" stroke="#f2f2f2" stroke-width="1.6"/></svg>
<div class="t" style="left:1929px;top:135px;color:#fff;font-weight:700">North</div>
<svg class="a" style="left:2019px;top:137px" width="11" height="11" viewBox="0 0 11 11"><path d="M1 1L10 10M10 1L1 10" stroke="#dfe2e7" stroke-width="1.7"/></svg>
<svg class="a" style="left:2542px;top:139px" width="10" height="9" viewBox="0 0 10 9"><path d="M0.5 0.5H9.5V2H0.5ZM0.5 3.6H9.5L5 8.4Z" fill="#b9c0cb"/></svg>
<div class="a" style="left:0;top:132px;width:287px;height:19px;background:#222733"></div>
<div class="t" style="left:3px;top:132.500px;color:#e8eaee;letter-spacing:-0.3px">Properties</div>
<svg class="a" style="left:273px;top:137px" width="11" height="10" viewBox="0 0 11 10"><path d="M0.8 0.8L10.2 9.2M10.2 0.8L0.8 9.2" stroke="#cfd2d8" stroke-width="1.7"/></svg>
<div class="a" style="left:0;top:151px;width:2px;height:1209px;background:#343b49"></div>
<div class="a" style="left:3px;top:152px;width:283px;height:74px;border:1px solid #434c5d"></div>
<div class="a" style="left:7px;top:154px;width:70px;height:70px;border:1px solid #4a5366;background:#3e4757"></div>
<svg class="a" style="left:26px;top:172px" width="34" height="34" viewBox="0 0 34 34"><path d="M1 17L17 2L33 17H26V17H8Z" fill="#e9e9e9"/><rect x="7.500" y="16.500" width="18.500" height="15" fill="none" stroke="#d6d6d6" stroke-width="1.1"/></svg>
<div class="t" style="left:81px;top:173px;letter-spacing:-0.3px">Elevation</div>
<div class="t" style="left:81px;top:190px;letter-spacing:-0.25px">Building Elevation</div>
<svg class="a" style="left:269.5px;top:188.0px" width="8" height="4" viewBox="0 0 8 4"><path d="M0 0H8L4.0 4Z" fill="#7f8898"/></svg>
<div class="t" style="left:6px;top:229px;letter-spacing:-0.25px">Elevation: North</div>
<svg class="a" style="left:196px;top:233px" width="9" height="6" viewBox="0 0 9 6"><path d="M1 1L4.500 4.500L8 1" fill="none" stroke="#8e97a6" stroke-width="1.3"/></svg>
<div class="a" style="left:4px;top:248px;width:205px;height:1px;background:#5b6678"></div>
<svg class="a" style="left:213px;top:231px" width="12" height="12" viewBox="0 0 12 12"><path d="M0.5 0.5h4v4h-4zM5.500 0.5h3v3h-3zM0.5 5.500h4v6h-4zM5.500 4.500h4v3h-4zM5.500 8.500h4v3h-4zM10 0h2v5h-1z" fill="#d9dce1"/></svg>
<div class="t" style="left:228px;top:229px;letter-spacing:-0.3px">Edit Type</div>
<div class="a" style="left:137px;top:274px;width:1px;height:806px;background:#434c5e;opacity:.7"></div>
<div class="a" style="left:271px;top:274px;width:1px;height:806px;background:#434c5e;opacity:.7"></div>
<div class="hd" style="top:253.8px;height:20px"><div class="lbl" style="left:2px;top:1px;max-width:280px">Graphics</div></div>
<svg class="a" style="left:274px;top:256.8px" width="7" height="8" viewBox="0 0 7 8"><path d="M1 3.500L3.500 1L6 3.500M1 7L3.500 4.500L6 7" fill="none" stroke="#d5d9df" stroke-width="1"/></svg>
<div class="row" style="top:275.0px;border-bottom:1px solid #434c5e"></div>
<div class="lbl" style="top:275.0px">View Scale</div>
<div class="btn" style="top:274.7px;height:20.5px;line-height:20px;text-align:left;padding-left:5px;border-color:#a9b0bc">1 : 100</div>
<div class="row" style="top:296.2px;border-bottom:1px solid #434c5e"></div>
<div class="lbl dis" style="top:296.2px">Scale Value &nbsp;&nbsp; 1:</div>
<div class="val dis" style="top:296.2px">100</div>
<div class="row" style="top:317.3px;border-bottom:1px solid #434c5e"></div>
<div class="lbl" style="top:317.3px">Display Model</div>
<div class="val" style="top:317.3px">Normal</div>
<div class="row" style="top:338.5px;border-bottom:1px solid #434c5e"></div>
<div class="lbl" style="top:338.5px">Detail Level</div>
<div class="val" style="top:338.5px">Fine</div>
<div class="row" style="top:359.7px;border-bottom:1px solid #434c5e"></div>
<div class="lbl" style="top:359.7px">Parts Visibility</div>
<div class="val" style="top:359.7px">Show Original</div>
<div class="row" style="top:380.9px;border-bottom:1px solid #434c5e"></div>
<div class="lbl" style="top:380.9px">Visibility/Graphics O...</div>
<div class="btn" style="top:381.4px">Edit...</div>
<div class="row" style="top:402.1px;border-bottom:1px solid #434c5e"></div>
<div class="lbl" style="top:402.1px">Graphic Display Opti...</div>
<div class="btn" style="top:402.6px">Edit...</div>
<div class="row" style="top:423.2px;border-bottom:1px solid #434c5e"></div>
<div class="lbl" style="top:423.2px">Hide at scales coarse...</div>
<div class="val" style="top:423.2px">&nbsp;1 : 5000</div>
<div class="row" style="top:444.4px;border-bottom:1px solid #434c5e"></div>
<div class="lbl" style="top:444.4px">Discipline</div>
<div class="val" style="top:444.4px">Architectural</div>
<div class="row" style="top:465.6px;border-bottom:1px solid #434c5e"></div>
<div class="lbl" style="top:465.6px">Show Hidden Lines</div>
<div class="val" style="top:465.6px">By Discipline</div>
<div class="row" style="top:486.8px;border-bottom:1px solid #434c5e"></div>
<div class="lbl" style="top:486.8px">Color Scheme Locati...</div>
<div class="val" style="top:486.8px">Background</div>
<div class="row" style="top:508.0px;border-bottom:1px solid #434c5e"></div>
<div class="lbl" style="top:508.0px">Color Scheme</div>
<div class="btn" style="top:508.5px">&lt;none&gt;</div>
<div class="row" style="top:529.1px;border-bottom:1px solid #434c5e"></div>
<div class="lbl" style="top:529.1px">Default Analysis Dis...</div>
<div class="val" style="top:529.1px">None</div>
<div class="row" style="top:550.3px;border-bottom:1px solid #434c5e"></div>
<div class="lbl" style="top:550.3px">Sun Path</div>
<div class="cb" style="top:554.3px"></div>
<div class="hd" style="top:571.5px;height:20px"><div class="lbl" style="left:2px;top:1px;max-width:280px">Extents</div></div>
<svg class="a" style="left:274px;top:574.5px" width="7" height="8" viewBox="0 0 7 8"><path d="M1 3.500L3.500 1L6 3.500M1 7L3.500 4.500L6 7" fill="none" stroke="#d5d9df" stroke-width="1"/></svg>
<div class="row" style="top:592.7px;border-bottom:1px solid #434c5e"></div>
<div class="lbl" style="top:592.7px">Crop View</div>
<div class="cb" style="top:596.7px"></div>
<div class="row" style="top:613.9px;border-bottom:1px solid #434c5e"></div>
<div class="lbl" style="top:613.9px">Crop Region Visible</div>
<div class="cb" style="top:617.9px"></div>
<div class="row" style="top:635.0px;border-bottom:1px solid #434c5e"></div>
<div class="lbl" style="top:635.0px">Annotation Crop</div>
<div class="cb" style="top:639.0px"></div>
<div class="row" style="top:656.2px;border-bottom:1px solid #434c5e"></div>
<div class="lbl" style="top:656.2px">Far Clipping</div>
<div class="btn" style="top:656.7px">No clip</div>
<div class="row" style="top:677.4px;border-bottom:1px solid #434c5e"></div>
<div class="lbl dis" style="top:677.4px">Far Clip Offset</div>
<div class="val dis" style="top:677.4px">29.5422 m</div>
<div class="row" style="top:698.6px;border-bottom:1px solid #434c5e"></div>
<div class="lbl" style="top:698.6px">Scope Box</div>
<div class="val" style="top:698.6px">None</div>
<div class="row" style="top:719.8px;border-bottom:1px solid #434c5e"></div>
<div class="lbl" style="top:719.8px">Associated Datum</div>
<div class="val" style="top:719.8px">None</div>
<div class="hd" style="top:740.9px;height:20px"><div class="lbl" style="left:2px;top:1px;max-width:280px">Identity Data</div></div>
<svg class="a" style="left:274px;top:743.9px" width="7" height="8" viewBox="0 0 7 8"><path d="M1 3.500L3.500 1L6 3.500M1 7L3.500 4.500L6 7" fill="none" stroke="#d5d9df" stroke-width="1"/></svg>
<div class="row" style="top:762.1px;border-bottom:1px solid #434c5e"></div>
<div class="lbl" style="top:762.1px">View Template</div>
<div class="btn" style="top:762.6px">&lt;None&gt;</div>
<div class="row" style="top:783.3px;border-bottom:1px solid #434c5e"></div>
<div class="lbl" style="top:783.3px">View Name</div>
<div class="val" style="top:783.3px">North</div>
<div class="row" style="top:804.5px;border-bottom:1px solid #434c5e"></div>
<div class="lbl dis" style="top:804.5px">Dependency</div>
<div class="val dis" style="top:804.5px">Independent</div>
<div class="row" style="top:825.7px;border-bottom:1px solid #434c5e"></div>
<div class="lbl" style="top:825.7px">Title on Sheet</div>
<div class="row" style="top:846.8px;border-bottom:1px solid #434c5e"></div>
<div class="lbl dis" style="top:846.8px">Referencing Sheet C...</div>
<div class="val dis" style="top:846.8px">&lt;None&gt;</div>
<div class="row" style="top:868.0px;border-bottom:1px solid #434c5e"></div>
<div class="lbl dis" style="top:868.0px">Referencing Sheet</div>
<div class="row" style="top:889.2px;border-bottom:1px solid #434c5e"></div>
<div class="lbl dis" style="top:889.2px">Referencing Detail</div>
<div class="hd" style="top:910.4px;height:20px"><div class="lbl" style="left:2px;top:1px;max-width:280px">Phasing</div></div>
<svg class="a" style="left:274px;top:913.4px" width="7" height="8" viewBox="0 0 7 8"><path d="M1 3.500L3.500 1L6 3.500M1 7L3.500 4.500L6 7" fill="none" stroke="#d5d9df" stroke-width="1"/></svg>
<div class="row" style="top:931.6px;border-bottom:1px solid #434c5e"></div>
<div class="lbl" style="top:931.6px">Phase Filter</div>
<div class="val" style="top:931.6px">Show All</div>
<div class="row" style="top:952.7px;border-bottom:1px solid #434c5e"></div>
<div class="lbl" style="top:952.7px">Phase</div>
<div class="val" style="top:952.7px">New Construction</div>
<div class="hd" style="top:973.9px;height:20px"><div class="lbl" style="left:2px;top:1px;max-width:280px">View to Sheet Positioning</div></div>
<svg class="a" style="left:274px;top:976.9px" width="7" height="8" viewBox="0 0 7 8"><path d="M1 3.500L3.500 1L6 3.500M1 7L3.500 4.500L6 7" fill="none" stroke="#d5d9df" stroke-width="1"/></svg>
<div class="row" style="top:995.1px;border-bottom:1px solid #434c5e"></div>
<div class="lbl" style="top:995.1px">Saved Position</div>
<div class="val" style="top:995.1px">&lt;None&gt;</div>
<div class="row" style="top:1016.3px;border-bottom:1px solid #434c5e"></div>
<div class="lbl dis" style="top:1016.3px">View Anchor</div>
<div class="row" style="top:1037.5px;border-bottom:1px solid #434c5e"></div>
<div class="lbl dis" style="top:1037.5px">View Position X</div>
<div class="row" style="top:1058.6px;border-bottom:1px solid #434c5e"></div>
<div class="lbl dis" style="top:1058.6px">View Position Y</div>
<div class="a" style="left:2px;top:1333px;width:284px;height:27px;background:#2d3441"></div>
<div class="a" style="left:4px;top:1335px;width:23px;height:22px;background:#3c8ab4"></div>
<svg class="a" style="left:7px;top:1338px" width="17" height="17" viewBox="0 0 17 17"><path d="M1 4h8M1 7h8M1 10h8M1 13h8" stroke="#7fb6d4" stroke-width="1"/><path d="M13 3v11" stroke="#fff" stroke-width="1.2"/><path d="M13 1L15.500 4.500H10.500ZM13 16L15.500 12.500H10.500Z" fill="#fff"/></svg>
<div class="a" style="left:30px;top:1335px;width:22px;height:22px;background:#3b4453"></div>
<div class="a" style="left:55px;top:1335px;width:22px;height:22px;background:#3b4453"></div>
<svg class="a" style="left:31px;top:1337px" width="20" height="18" viewBox="0 0 20 18"><text x="1" y="8" font-family="Liberation Sans, sans-serif" font-weight="700" font-size="8" fill="#6fa8dc">A</text><text x="1" y="16" font-family="Liberation Sans, sans-serif" font-weight="700" font-size="8" fill="#e8e8e8">Z</text><path d="M13 2v12" stroke="#fff" stroke-width="1.3"/><path d="M13 17L15.600 13H10.400Z" fill="#fff"/></svg>
<svg class="a" style="left:56px;top:1337px" width="20" height="18" viewBox="0 0 20 18"><text x="1" y="8" font-family="Liberation Sans, sans-serif" font-weight="700" font-size="8" fill="#e8e8e8">Z</text><text x="1" y="16" font-family="Liberation Sans, sans-serif" font-weight="700" font-size="8" fill="#6fa8dc">A</text><path d="M13 2v12" stroke="#fff" stroke-width="1.3"/><path d="M13 17L15.600 13H10.400Z" fill="#fff"/></svg>
<div class="a" style="left:206px;top:1336px;width:77px;height:20px;border:1px solid #4d5769;border-radius:2px;text-align:center;line-height:19px;color:#7b8595;padding-left:2px">Apply</div>
<svg class="a" style="left:289px;top:154px" width="2248" height="1184" viewBox="289 154 2248 1184">
<path d="M812 560.500H2474.500" stroke="#e3e6ea" stroke-width="1.2" stroke-dasharray="43.100 11.200 21.100 11.200" stroke-dashoffset="13.400" fill="none"/>
<path d="M1661.300 610.500H2035" stroke="#e3e6ea" stroke-width="1.2" stroke-dasharray="43.100 11.200 21.100 11.200" fill="none"/>
<path d="M1661.300 664.500H2035" stroke="#e3e6ea" stroke-width="1.2" stroke-dasharray="43.100 11.200 21.100 11.200" fill="none"/>
<rect x="546.500" y="560.500" width="168" height="50" fill="#8b6f56" stroke="#f1e4d6" stroke-width="1"/>
<rect x="460.500" y="610.500" width="432" height="53.500" fill="#8b6f56" stroke="#f1e4d6" stroke-width="1"/>
<rect x="1220.500" y="610.500" width="430.500" height="53.500" fill="#8b6f56" stroke="#d9cdbf" stroke-width="1"/>
<path d="M727.500 539V692" stroke="#d5dbe3" stroke-width="1.200"/>
<rect x="707.200" y="691" width="20.800" height="4.700" fill="#d9d9d9"/>
<path d="M708 521.300L727.600 502.700V539.500Z" fill="#8fbdf0" stroke="#1f4677" stroke-width="1"/>
<circle cx="727.900" cy="521.400" r="12.800" fill="#222933" stroke="#5e7694" stroke-width="1.100"/><path d="M715.200 521.400H740.600" stroke="#5e7694" stroke-width="1"/>
<path d="M724.500 527.500h6.500" stroke="#4a5568" stroke-width="1"/>
<g fill="none" stroke="#fafafa" stroke-width="1.300"><path d="M514.500 610.200L541 596.500M521 610.200L546 598.500M536.500 598V610M541.500 597L546.500 608M531 610.200L546.500 601.500"/><path d="M540.500 583q-3.500 6 0 12.500M719.300 583.500q5.500 6.500 0 13.500"/></g>
<rect x="540.500" y="579.500" width="5.800" height="17.500" fill="#f2f2f2"/><path d="M543.400 582V595" stroke="#8a8a8a" stroke-width="1"/>
<rect x="714.800" y="579.500" width="4.600" height="18.500" fill="#f2f2f2"/><path d="M717 582V596" stroke="#8a8a8a" stroke-width="1"/>
<rect x="887" y="609" width="6" height="2" fill="#f1e4d6"/>
<rect x="723" y="664.200" width="3" height="3" fill="#cfcfcf"/>
<circle cx="2483.6" cy="560.5" r="9.0" fill="#222933" stroke="#3f6ea8" stroke-width="1"/><path d="M2483.6 560.5V551.5A9.0 9.0 0 0 0 2474.6 560.5ZM2483.6 560.5V569.5A9.0 9.0 0 0 0 2492.6 560.5Z" fill="#7fb2e6"/>
<circle cx="2043.8" cy="610.5" r="9.0" fill="#222933" stroke="#3f6ea8" stroke-width="1"/><path d="M2043.8 610.5V601.5A9.0 9.0 0 0 0 2034.8 610.5ZM2043.8 610.5V619.5A9.0 9.0 0 0 0 2052.8 610.5Z" fill="#7fb2e6"/>
<circle cx="2043.8" cy="664.5" r="9.0" fill="#222933" stroke="#3f6ea8" stroke-width="1"/><path d="M2043.8 664.5V655.5A9.0 9.0 0 0 0 2034.8 664.5ZM2043.8 664.5V673.5A9.0 9.0 0 0 0 2052.8 664.5Z" fill="#7fb2e6"/>
<text x="2466" y="556.500" font-family="Liberation Sans, sans-serif" font-size="9.500" fill="#f0f0f0" text-anchor="end">Roof</text><text x="2467" y="571.500" font-family="Liberation Sans, sans-serif" font-size="9.500" fill="#f0f0f0" text-anchor="end">4.8 m</text>
<text x="2026" y="606.500" font-family="Liberation Sans, sans-serif" font-size="9.500" fill="#f0f0f0" text-anchor="end">1st Floor</text><text x="2027" y="621.500" font-family="Liberation Sans, sans-serif" font-size="9.500" fill="#f0f0f0" text-anchor="end">2.5 m</text>
<text x="2026" y="660.500" font-family="Liberation Sans, sans-serif" font-size="9.500" fill="#f0f0f0" text-anchor="end">Ground Floor</text><text x="2027" y="675.500" font-family="Liberation Sans, sans-serif" font-size="9.500" fill="#f0f0f0" text-anchor="end">0 m</text>
</svg>
<div class="a" style="left:303px;top:712px;width:288px;height:612px;background:#3b4453;border:1px solid #414a5c;border-radius:8px;overflow:hidden;box-shadow:0 2px 6px rgba(0,0,0,.45)">
<div class="a" style="left:0;top:0;width:286px;height:20px;background:#222833"></div>
<div class="a" style="left:0;top:19px;width:286px;height:26px;background:#1b1e26"></div>
<div class="a" style="left:5px;top:20px;width:24px;height:26px;background:#3b4453;border-radius:3px 3px 0 0"></div>
</div>
<div class="t" style="left:307px;top:712.5px;letter-spacing:-0.32px">Project Browser - 2 Old maidstone Rd, DA14...</div>
<svg class="a" style="left:576px;top:716px" width="11" height="11" viewBox="0 0 11 11"><path d="M1 1L10 10M10 1L1 10" stroke="#e6e8ec" stroke-width="1.8"/></svg>
<svg class="a" style="left:312px;top:736px" width="18" height="18" viewBox="0 0 18 18"><path d="M1 9L8.500 2L16 9H14V16H3V9Z" fill="#e4e4e4"/><rect x="7" y="11" width="3.500" height="5" fill="#8b6f56"/><path d="M11.500 11h6M11.500 13.500h6M11.500 16h6" stroke="#79b8ea" stroke-width="1.3"/></svg>
<svg class="a" style="left:337px;top:736px" width="18" height="18" viewBox="0 0 18 18"><path d="M1 5V1H5M13 1H17V5M17 13V17H13M5 17H1V13" fill="none" stroke="#e4e4e4" stroke-width="1.4"/><path d="M4.500 7L7 4.500H13.500V11L11 13.500H4.500Z" fill="#e9e9e9"/><path d="M11 7L13.500 4.500V11L11 13.500Z" fill="#bdbdbd"/></svg>
<svg class="a" style="left:362px;top:736px" width="18" height="18" viewBox="0 0 18 18"><rect x="0.5" y="0.5" width="17" height="17" fill="#e8e8e8"/><rect x="0.5" y="0.5" width="17" height="3" fill="#c4c4c4"/><path d="M3 6h3v3H3zM3 11h3v3H3zM8 6h3v3H8z" fill="none" stroke="#666" stroke-width="1"/><path d="M12.500 7h3M8 11h7M8 13.500h7" stroke="#666" stroke-width="1.2"/></svg>
<svg class="a" style="left:387px;top:736px" width="18" height="18" viewBox="0 0 18 18"><rect x="0.5" y="2.500" width="17" height="13" fill="#e8e8e8"/><path d="M0.5 6.500h17M0.5 9.500h17M0.5 12.500h17M5.500 2.500v13M11.500 6.500v9" stroke="#555e6b" stroke-width="1"/></svg>
<svg class="a" style="left:412px;top:736px" width="18" height="18" viewBox="0 0 18 18"><path d="M1 16V7L8 2L12.500 7.500L16 16Z" fill="#e6e6e6"/><path d="M8 2Q13 3 16.500 9Q18 13 15 15.500Q12.500 16.500 12 13.500" fill="none" stroke="#cfcfcf" stroke-width="1.6"/><circle cx="14.500" cy="13" r="1.500" fill="none" stroke="#888" stroke-width="1"/></svg>
<svg class="a" style="left:438px;top:736px" width="18" height="18" viewBox="0 0 18 18"><path d="M1 2H8V9H1ZM10 2H17V16H1V11H10Z" fill="#e6e6e6"/></svg>
<svg class="a" style="left:463px;top:736px" width="18" height="18" viewBox="0 0 18 18"><path d="M4 1H1V17H4M14 1H17V17H14" fill="none" stroke="#e4e4e4" stroke-width="1.5"/><circle cx="7.500" cy="7" r="4" fill="#f0f0f0"/><path d="M7 8.500L9 6.500H14.500V12L12.500 14H7Z" fill="#d6d6d6" stroke="#777" stroke-width=".6"/></svg>
<svg class="a" style="left:489px;top:736px" width="18" height="18" viewBox="0 0 18 18"><g fill="none" stroke="#e2a35a" stroke-width="1.8" stroke-linecap="round"><path d="M8 6.500L10.500 4A2.800 2.800 0 0 1 14.500 8L12 10.500"/><path d="M10 11.500L7.500 14A2.800 2.800 0 0 1 3.500 10L6 7.500"/><path d="M7 11L11 7"/></g></svg>
<div class="a" style="left:317px;top:767px;width:265px;height:25px;background:#2b313d"></div>
<svg class="a" style="left:324px;top:771px" width="18" height="18" viewBox="0 0 18 18"><circle cx="7.500" cy="7" r="5" fill="none" stroke="#c9ced6" stroke-width="1.5"/><path d="M11 11L16 16" stroke="#c9ced6" stroke-width="2"/></svg>
<div class="t" style="left:350px;top:770px;color:#8d96a5;font-weight:700;font-size:12.500px;letter-spacing:-0.5px">Search</div>
<div class="a" style="left:571px;top:800px;width:19px;height:19px;background:#353c4a"></div>
<div class="a" style="left:571px;top:1301px;width:19px;height:21px;background:#353c4a;border-bottom-right-radius:6px"></div>
<svg class="a" style="left:575px;top:805px" width="11" height="7" viewBox="0 0 11 7"><path d="M1 6L5.500 1.500L10 6" fill="none" stroke="#9aa3b1" stroke-width="1.6"/></svg>
<svg class="a" style="left:575px;top:1308px" width="11" height="7" viewBox="0 0 11 7"><path d="M1 1L5.500 5.500L10 1" fill="none" stroke="#9aa3b1" stroke-width="1.6"/></svg>
<div class="a" style="left:576px;top:824px;width:8px;height:386px;background:#74819a;border-radius:4px"></div>
<div class="a" style="left:308px;top:1161px;width:263px;height:22px;background:#2f3543;border-top:1px solid #3f4758;border-bottom:1px solid #3f4758"></div>
<svg class="a" style="left:313.0px;top:807.2px" width="9" height="9" viewBox="0 0 9 9"><path d="M0.5 4.500H8.500" stroke="#c9cdd4" stroke-width="1.8"/></svg>
<svg class="a" style="left:330px;top:802.2px" width="17" height="16.5" viewBox="0 0 18 18" preserveAspectRatio="none"><path d="M1 5V1H5M13 1H17V5M17 13V17H13M5 17H1V13" fill="none" stroke="#e4e4e4" stroke-width="1.4"/><path d="M4.500 7L7 4.500H13.500V11L11 13.500H4.500Z" fill="#e9e9e9"/><path d="M11 7L13.500 4.500V11L11 13.500Z" fill="#bdbdbd"/></svg>
<div class="tr" style="left:351px;top:802.2px;letter-spacing:-0.2px">Views (all)</div>
<svg class="a" style="left:330.0px;top:828.4px" width="9" height="9" viewBox="0 0 9 9"><path d="M0.5 4.500H8.500M4.500 0.5V8.500" stroke="#c9cdd4" stroke-width="1.8"/></svg>
<div class="tr" style="left:347px;top:823.4px;letter-spacing:-0.2px">Structural Plans</div>
<svg class="a" style="left:330.0px;top:849.5px" width="9" height="9" viewBox="0 0 9 9"><path d="M0.5 4.500H8.500" stroke="#c9cdd4" stroke-width="1.8"/></svg>
<div class="tr" style="left:347px;top:844.5px;letter-spacing:-0.2px">Floor Plans</div>
<svg class="a" style="left:364px;top:866.5px" width="18" height="17" viewBox="0 0 18 18" preserveAspectRatio="none"><rect x="3.500" y="3.500" width="11" height="11" fill="none" stroke="#e2e2e2" stroke-width="1.1"/><path d="M1 1H17V17H1Z" fill="none" stroke="#e2e2e2" stroke-width="1.2" stroke-dasharray="3.200 1.600" stroke-dashoffset="1.600"/></svg>
<div class="tr" style="left:386px;top:865.7px;letter-spacing:-0.2px">1st Floor</div>
<svg class="a" style="left:364px;top:887.7px" width="18" height="17" viewBox="0 0 18 18" preserveAspectRatio="none"><rect x="3.500" y="3.500" width="11" height="11" fill="#8cc4f8" stroke="#e2e2e2" stroke-width="1.1"/><path d="M1 1H17V17H1Z" fill="none" stroke="#e2e2e2" stroke-width="1.2" stroke-dasharray="3.200 1.600" stroke-dashoffset="1.600"/></svg>
<div class="tr" style="left:386px;top:886.9px;letter-spacing:-0.2px">1st Floor-Proposed</div>
<svg class="a" style="left:364px;top:908.9px" width="18" height="17" viewBox="0 0 18 18" preserveAspectRatio="none"><rect x="3.500" y="3.500" width="11" height="11" fill="none" stroke="#e2e2e2" stroke-width="1.1"/><path d="M1 1H17V17H1Z" fill="none" stroke="#e2e2e2" stroke-width="1.2" stroke-dasharray="3.200 1.600" stroke-dashoffset="1.600"/></svg>
<div class="tr" style="left:386px;top:908.1px;letter-spacing:-0.2px">Ground Floor</div>
<svg class="a" style="left:364px;top:930.0px" width="18" height="17" viewBox="0 0 18 18" preserveAspectRatio="none"><rect x="3.500" y="3.500" width="11" height="11" fill="#8cc4f8" stroke="#e2e2e2" stroke-width="1.1"/><path d="M1 1H17V17H1Z" fill="none" stroke="#e2e2e2" stroke-width="1.2" stroke-dasharray="3.200 1.600" stroke-dashoffset="1.600"/></svg>
<div class="tr" style="left:386px;top:929.2px;letter-spacing:-0.2px">Ground Floor-Existing</div>
<svg class="a" style="left:364px;top:951.2px" width="18" height="17" viewBox="0 0 18 18" preserveAspectRatio="none"><rect x="3.500" y="3.500" width="11" height="11" fill="#8cc4f8" stroke="#e2e2e2" stroke-width="1.1"/><path d="M1 1H17V17H1Z" fill="none" stroke="#e2e2e2" stroke-width="1.2" stroke-dasharray="3.200 1.600" stroke-dashoffset="1.600"/></svg>
<div class="tr" style="left:386px;top:950.4px;letter-spacing:-0.2px">Ground Floor-Proposed</div>
<svg class="a" style="left:364px;top:972.4px" width="18" height="17" viewBox="0 0 18 18" preserveAspectRatio="none"><rect x="3.500" y="3.500" width="11" height="11" fill="none" stroke="#e2e2e2" stroke-width="1.1"/><path d="M1 1H17V17H1Z" fill="none" stroke="#e2e2e2" stroke-width="1.2" stroke-dasharray="3.200 1.600" stroke-dashoffset="1.600"/></svg>
<div class="tr" style="left:386px;top:971.6px;letter-spacing:-0.2px">Roof</div>
<svg class="a" style="left:364px;top:993.5px" width="18" height="17" viewBox="0 0 18 18" preserveAspectRatio="none"><rect x="3.500" y="3.500" width="11" height="11" fill="none" stroke="#e2e2e2" stroke-width="1.1"/><path d="M1 1H17V17H1Z" fill="none" stroke="#e2e2e2" stroke-width="1.2" stroke-dasharray="3.200 1.600" stroke-dashoffset="1.600"/></svg>
<div class="tr" style="left:386px;top:992.7px;letter-spacing:-0.2px">Site</div>
<svg class="a" style="left:330.0px;top:1018.9px" width="9" height="9" viewBox="0 0 9 9"><path d="M0.5 4.500H8.500M4.500 0.5V8.500" stroke="#c9cdd4" stroke-width="1.8"/></svg>
<div class="tr" style="left:347px;top:1013.9px;letter-spacing:-0.2px">Ceiling Plans</div>
<svg class="a" style="left:330.0px;top:1040.1px" width="9" height="9" viewBox="0 0 9 9"><path d="M0.5 4.500H8.500" stroke="#c9cdd4" stroke-width="1.8"/></svg>
<div class="tr" style="left:347px;top:1035.1px;letter-spacing:-0.2px">3D Views</div>
<svg class="a" style="left:364px;top:1057.0px" width="18" height="17" viewBox="0 0 18 18" preserveAspectRatio="none"><rect x="3.500" y="3.500" width="11" height="11" fill="none" stroke="#e2e2e2" stroke-width="1.1"/><path d="M1 1H17V17H1Z" fill="none" stroke="#e2e2e2" stroke-width="1.2" stroke-dasharray="3.200 1.600" stroke-dashoffset="1.600"/></svg>
<div class="tr" style="left:386px;top:1056.2px;letter-spacing:-0.2px">3D</div>
<svg class="a" style="left:364px;top:1078.2px" width="18" height="17" viewBox="0 0 18 18" preserveAspectRatio="none"><rect x="3.500" y="3.500" width="11" height="11" fill="none" stroke="#e2e2e2" stroke-width="1.1"/><path d="M1 1H17V17H1Z" fill="none" stroke="#e2e2e2" stroke-width="1.2" stroke-dasharray="3.200 1.600" stroke-dashoffset="1.600"/></svg>
<div class="tr" style="left:386px;top:1077.4px;letter-spacing:-0.2px">3D View</div>
<svg class="a" style="left:364px;top:1099.4px" width="18" height="17" viewBox="0 0 18 18" preserveAspectRatio="none"><rect x="3.500" y="3.500" width="11" height="11" fill="none" stroke="#e2e2e2" stroke-width="1.1"/><path d="M1 1H17V17H1Z" fill="none" stroke="#e2e2e2" stroke-width="1.2" stroke-dasharray="3.200 1.600" stroke-dashoffset="1.600"/></svg>
<div class="tr" style="left:386px;top:1098.6px;letter-spacing:-0.2px">{3D}</div>
<svg class="a" style="left:330.0px;top:1124.8px" width="9" height="9" viewBox="0 0 9 9"><path d="M0.5 4.500H8.500" stroke="#c9cdd4" stroke-width="1.8"/></svg>
<div class="tr" style="left:347px;top:1119.8px;letter-spacing:-0.2px">Elevations (Building Elevation)</div>
<svg class="a" style="left:364px;top:1141.7px" width="18" height="17" viewBox="0 0 18 18" preserveAspectRatio="none"><rect x="3.500" y="3.500" width="11" height="11" fill="none" stroke="#e2e2e2" stroke-width="1.1"/><path d="M1 1H17V17H1Z" fill="none" stroke="#e2e2e2" stroke-width="1.2" stroke-dasharray="3.200 1.600" stroke-dashoffset="1.600"/></svg>
<div class="tr" style="left:386px;top:1140.9px;letter-spacing:-0.2px">East</div>
<svg class="a" style="left:364px;top:1162.9px" width="18" height="17" viewBox="0 0 18 18" preserveAspectRatio="none"><rect x="3.500" y="3.500" width="11" height="11" fill="none" stroke="#e2e2e2" stroke-width="1.1"/><path d="M1 1H17V17H1Z" fill="none" stroke="#e2e2e2" stroke-width="1.2" stroke-dasharray="3.200 1.600" stroke-dashoffset="1.600"/></svg>
<div class="tr" style="left:386px;top:1162.1px;font-weight:700;color:#fff;letter-spacing:-0.2px">North</div>
<svg class="a" style="left:364px;top:1184.1px" width="18" height="17" viewBox="0 0 18 18" preserveAspectRatio="none"><rect x="3.500" y="3.500" width="11" height="11" fill="none" stroke="#e2e2e2" stroke-width="1.1"/><path d="M1 1H17V17H1Z" fill="none" stroke="#e2e2e2" stroke-width="1.2" stroke-dasharray="3.200 1.600" stroke-dashoffset="1.600"/></svg>
<div class="tr" style="left:386px;top:1183.3px;letter-spacing:-0.2px">South</div>
<svg class="a" style="left:364px;top:1205.2px" width="18" height="17" viewBox="0 0 18 18" preserveAspectRatio="none"><rect x="3.500" y="3.500" width="11" height="11" fill="none" stroke="#e2e2e2" stroke-width="1.1"/><path d="M1 1H17V17H1Z" fill="none" stroke="#e2e2e2" stroke-width="1.2" stroke-dasharray="3.200 1.600" stroke-dashoffset="1.600"/></svg>
<div class="tr" style="left:386px;top:1204.4px;letter-spacing:-0.2px">West</div>
<svg class="a" style="left:330.0px;top:1230.6px" width="9" height="9" viewBox="0 0 9 9"><path d="M0.5 4.500H8.500M4.500 0.5V8.500" stroke="#c9cdd4" stroke-width="1.8"/></svg>
<div class="tr" style="left:347px;top:1225.6px;letter-spacing:-0.2px">Sections (Building Section)</div>
<svg class="a" style="left:330px;top:1248.1px" width="17" height="17" viewBox="0 0 18 18"><rect x="0.5" y="0.5" width="17" height="17" fill="#e8e8e8"/><rect x="0.5" y="0.5" width="17" height="3" fill="#c4c4c4"/><path d="M3 6h3v3H3zM3 11h3v3H3zM8 6h3v3H8z" fill="none" stroke="#666" stroke-width="1"/><path d="M12.500 7h3M8 11h7M8 13.500h7" stroke="#666" stroke-width="1.2"/></svg>
<div class="tr" style="left:350px;top:1246.8px;letter-spacing:-0.2px">Legends</div>
<svg class="a" style="left:313.0px;top:1272.9px" width="9" height="9" viewBox="0 0 9 9"><path d="M0.5 4.500H8.500" stroke="#c9cdd4" stroke-width="1.8"/></svg>
<svg class="a" style="left:330px;top:1268.7px" width="17" height="17" viewBox="0 0 18 18"><rect x="0.5" y="2.500" width="17" height="13" fill="#e8e8e8"/><path d="M0.5 6.500h17M0.5 9.500h17M0.5 12.500h17M5.500 2.500v13M11.500 6.500v9" stroke="#555e6b" stroke-width="1"/></svg>
<div class="tr" style="left:351px;top:1267.9px;letter-spacing:-0.2px">Schedules/Quantities (all)</div>
<svg class="a" style="left:347px;top:1289.9px" width="18" height="17" viewBox="0 0 18 18" preserveAspectRatio="none"><rect x="3.500" y="3.500" width="11" height="11" fill="none" stroke="#e2e2e2" stroke-width="1.1"/><path d="M1 1H17V17H1Z" fill="none" stroke="#e2e2e2" stroke-width="1.2" stroke-dasharray="3.200 1.600" stroke-dashoffset="1.600"/></svg>
<div class="tr" style="left:369px;top:1289.1px;letter-spacing:-0.2px">Building Data</div>
<svg class="a" style="left:304px;top:800px" width="266" height="522" viewBox="304 800 266 522" fill="none" stroke="#586274" stroke-width="1" stroke-dasharray="1 1">
<path d="M317.500 819V1235.5M317.500 1285.5V1299.5M322 833.5H329M322 854.5H329M322 1024.5H329M322 1045.5H329M322 1130.5H329M322 1235.5H329"/>
<path d="M334.500 861.5V1003.5M334.500 1052.5V1108.5M334.500 1137.5V1214.5"/>
<path d="M334.500 876.5H362"/>
<path d="M334.500 897.5H362"/>
<path d="M334.500 918.5H362"/>
<path d="M334.500 939.5H362"/>
<path d="M334.500 960.5H362"/>
<path d="M334.500 981.5H362"/>
<path d="M334.500 1003.5H362"/>
<path d="M334.500 1066.5H362"/>
<path d="M334.500 1087.5H362"/>
<path d="M334.500 1108.5H362"/>
<path d="M334.500 1151.5H362"/>
<path d="M334.500 1172.5H362"/>
<path d="M334.500 1193.5H362"/>
<path d="M334.500 1214.5H362"/>
<path d="M322 1299.5H345"/>
</svg>
<div class="a" style="left:305px;top:1309px;width:266px;height:10px;overflow:hidden"><div class="tr" style="left:46px;top:0px;letter-spacing:-0.2px">Sheets (all)</div><svg class="a" style="left:25px;top:4px" width="18" height="12" viewBox="0 0 18 12"><path d="M1 12V5L6 1V12ZM7 12V3L12 0L17 8V12Z" fill="#e4e4e4"/></svg><svg class="a" style="left:8px;top:9px" width="9" height="3"><path d="M0 1.500H9" stroke="#c4c9d1" stroke-width="1.6"/></svg></div>
<div class="a" style="left:2537px;top:153px;width:20px;height:1185px;background:#343b48"></div>
<div class="a" style="left:2557px;top:132px;width:1px;height:1228px;background:#252a34"></div>
<div class="a" style="left:2537px;top:153px;width:20px;height:19px;background:#2f3643"></div>
<svg class="a" style="left:2541px;top:160px" width="11" height="7" viewBox="0 0 11 7"><path d="M1 6L5.500 1.500L10 6" fill="none" stroke="#9aa3b1" stroke-width="1.7"/></svg>
<svg class="a" style="left:2541px;top:1328px" width="11" height="7" viewBox="0 0 11 7"><path d="M1 1L5.500 5.500L10 1" fill="none" stroke="#aab2be" stroke-width="1.7"/></svg>
<div class="a" style="left:2537px;top:1321px;width:20px;height:1px;background:#444c5b"></div>
<div class="a" style="left:2542px;top:738px;width:8px;height:19px;background:#74819a;border-radius:4px"></div>
<div class="a" style="left:289px;top:1338px;width:2268px;height:21px;background:#323946"></div>
<div class="a" style="left:0;top:1359px;width:2560px;height:1px;background:#2a303b"></div>
<div class="a" style="left:289px;top:1338px;width:388px;height:21px;background:#343b48"></div>
<div class="t" style="left:315px;top:1339.500px;font-family:'Liberation Serif',serif;font-size:13px;color:#e3e6ea">1 : 100</div>
<svg class="a" style="left:673px;top:1343px" width="8" height="11" viewBox="0 0 8 11"><path d="M6 1L2 5.500L6 10" fill="none" stroke="#8e97a6" stroke-width="1.6"/></svg>
<div class="a" style="left:1594px;top:1343px;width:19px;height:9px;background:#7c89a2;border-radius:4.500px"></div>
<svg class="a" style="left:2519px;top:1343px" width="8" height="11" viewBox="0 0 8 11"><path d="M2 1L6 5.500L2 10" fill="none" stroke="#aab2be" stroke-width="1.6"/></svg>
<div class="a" style="left:2515px;top:1339px;width:1px;height:19px;background:#3d4554"></div>
<svg class="a" style="left:2544px;top:1345px" width="9" height="10" viewBox="0 0 9 10"><rect x="5.500" y="1" width="2.200" height="2.200" fill="#b4bbc6"/><rect x="1" y="6" width="2.200" height="2.200" fill="#b4bbc6"/><rect x="5.500" y="6" width="2.200" height="2.200" fill="#b4bbc6"/></svg>
<svg class="a" style="left:378px;top:1338px" width="20" height="20" viewBox="0 0 20 20"><defs><pattern id="ck" width="2" height="2" patternUnits="userSpaceOnUse"><rect width="2" height="2" fill="#b9b4a4"/><rect width="1" height="1" fill="#8c8a80"/><rect x="1" y="1" width="1" height="1" fill="#8c8a80"/></pattern></defs><rect x="1" y="3" width="17" height="13" fill="url(#ck)"/></svg>
<svg class="a" style="left:405px;top:1338px" width="20" height="20" viewBox="0 0 20 20"><path d="M2 6L5 3H17V14L14 17H2Z" fill="#5aa5e6"/><path d="M2 6H14V17M14 6L17 3" stroke="#2f6fb0" stroke-width=".8" fill="none"/><path d="M2 6L5 3H17L14 6Z" fill="#8cc8f6"/></svg>
<svg class="a" style="left:431px;top:1338px" width="20" height="20" viewBox="0 0 20 20"><circle cx="8" cy="8" r="3.600" fill="#f6c344"/><path d="M8 1.500v2M8 12.500v2M1.500 8h2M12.500 8h2M3.400 3.400l1.400 1.400M11.200 11.200l1.400 1.400M12.600 3.400l-1.400 1.400M3.400 12.600l1.400-1.400" stroke="#f6c344" stroke-width="1.300"/><circle cx="14.5" cy="11.5" r="3.600" fill="#62c8cf"/><rect x="13.1" y="14.7" width="2.800" height="2.600" fill="#eef"/></svg>
<svg class="a" style="left:458px;top:1338px" width="20" height="20" viewBox="0 0 20 20"><ellipse cx="8" cy="16" rx="6" ry="1.600" fill="#111"/><circle cx="8" cy="8" r="5.600" fill="#d9d9d9"/><circle cx="6.500" cy="6.500" r="2.500" fill="#f1f1f1"/><circle cx="15" cy="11.5" r="3.600" fill="#62c8cf"/><rect x="13.6" y="14.7" width="2.800" height="2.600" fill="#eef"/></svg>
<svg class="a" style="left:485px;top:1338px" width="20" height="20" viewBox="0 0 20 20"><path d="M1 12.500h3M7 17V7H15M10 3.500v2" stroke="#dcdcdc" stroke-width="1.400" fill="none"/><circle cx="10" cy="3" r="1" fill="#62a8e4"/><path d="M10 11L16 17M16 11L10 17" stroke="#e8524f" stroke-width="1.800"/></svg>
<svg class="a" style="left:512px;top:1338px" width="20" height="20" viewBox="0 0 20 20"><path d="M1 12.500h3M7 17V7H15M10 3.500v2" stroke="#dcdcdc" stroke-width="1.400" fill="none"/><circle cx="10" cy="3" r="1" fill="#62a8e4"/><circle cx="14.5" cy="11.5" r="3.600" fill="#62c8cf"/><rect x="13.1" y="14.7" width="2.800" height="2.600" fill="#eef"/></svg>
<svg class="a" style="left:539px;top:1338px" width="20" height="20" viewBox="0 0 20 20"><circle cx="5" cy="11.500" r="2.800" fill="none" stroke="#aeb6c2" stroke-width="1.400"/><circle cx="14" cy="11.500" r="2.800" fill="none" stroke="#aeb6c2" stroke-width="1.400"/><path d="M2.200 10.500L4 5.500M16.800 10.500L15 5.500M7.800 11q1.700-1.400 3.400 0" stroke="#aeb6c2" stroke-width="1.300" fill="none"/></svg>
<svg class="a" style="left:565px;top:1338px" width="20" height="20" viewBox="0 0 20 20"><circle cx="10" cy="8" r="4.600" fill="#62c8cf"/><rect x="8" y="12.400" width="4" height="3.600" fill="#eef0f4"/></svg>
<svg class="a" style="left:592px;top:1338px" width="20" height="20" viewBox="0 0 20 20"><path d="M3 3H12L15 6V12H3Z" fill="#c9c9c9"/><path d="M5 5.500h5M5 8h7" stroke="#777" stroke-width="1"/><path d="M7 12v5h10v-8" fill="none" stroke="#dcdcdc" stroke-width="1.200" stroke-dasharray="2.500 1.500"/></svg>
<svg class="a" style="left:618px;top:1338px" width="20" height="20" viewBox="0 0 20 20"><path d="M2 7L7 3H18V13L13 17H2Z" fill="none" stroke="#dcdcdc" stroke-width="1"/><path d="M2 7H13V17M13 7L18 3M5.500 7V17M9.500 7V17M2 10.500H13M2 14H13" stroke="#e06a64" stroke-width="1" fill="none"/><circle cx="14.500" cy="12.500" r="3.800" fill="#f6cf62"/><rect x="13.100" y="15.800" width="2.800" height="2.400" fill="#eee"/></svg>
<svg class="a" style="left:645px;top:1338px" width="20" height="20" viewBox="0 0 20 20"><path d="M2 3v11M15 3v6M2 5.500h13M2 12.500h7" stroke="#dcdcdc" stroke-width="1.200" fill="none" /><path d="M3.500 5.500l2-1.300v2.600zM13.500 5.500l-2-1.300v2.600z" fill="#dcdcdc"/><circle cx="15" cy="12" r="3.600" fill="#62c8cf"/><rect x="13.6" y="15.2" width="2.800" height="2.600" fill="#eef"/></svg>
<div class="a" style="left:0;top:1360px;width:2560px;height:6px;background:#3a4353"></div>
<div class="a" style="left:1525px;top:1363px;width:8px;height:3px;background:#e8e8e8"></div>
<div class="a" style="left:1769px;top:1363px;width:9px;height:3px;background:#cfd3da"></div>
<div class="a" style="left:1811px;top:1363px;width:17px;height:3px;background:#9aa3b0"></div>
<div class="a" style="left:1836px;top:1363px;width:14px;height:3px;background:#8b94a2"></div>
<div class="a" style="left:2457px;top:1363px;width:14px;height:3px;background:#e4e4e4"></div>
<div class="a" style="left:2313px;top:1364px;width:8px;height:2px;background:#d98a5a"></div>
<div class="a" style="left:2337px;top:1364px;width:8px;height:2px;background:#e06a64"></div>
<div class="a" style="left:2362px;top:1364px;width:8px;height:2px;background:#d8d8d8"></div>
<div class="a" style="left:2391px;top:1364px;width:8px;height:2px;background:#e06a64"></div>
<div class="a" style="left:2418px;top:1364px;width:8px;height:2px;background:#cfcfcf"></div>
<div class="a" style="left:2332px;top:180px;width:38px;height:20px;background:#7a7a7a;border-radius:10px"></div>
<div class="a" style="left:2336px;top:183.500px;width:13px;height:13px;background:#fff;border-radius:50%"></div>
<div class="t" style="left:2374px;top:173px;color:#e2e2e2;text-shadow:1px 1px 0 #000;letter-spacing:-0.1px">Accelerated Graphics</div>
<div class="t" style="left:2374px;top:186px;color:#e2e2e2;font-style:italic;text-shadow:1px 1px 0 #000;letter-spacing:-0.2px">Tech Preview</div>
<div class="a" style="left:2504px;top:156px;width:33px;height:117px;background:#59626e;border-radius:4px"></div>
<div class="a" style="left:2505px;top:213px;width:31px;height:1px;background:#4c5561"></div>
<svg class="a" style="left:2525px;top:157px" width="9" height="9" viewBox="0 0 9 9"><path d="M1.500 1.500L7.500 7.500M7.500 1.500L1.500 7.500" stroke="#cfd3da" stroke-width="1.300"/></svg>
<svg class="a" style="left:2508px;top:176px" width="24" height="26" viewBox="0 0 24 26"><path d="M4 1H19V14H12Q4 14 1 9Q1 3 4 1Z" fill="#d0d3d8"/><circle cx="10.500" cy="9" r="5.500" fill="#e9e9e9" stroke="#b3b8c0" stroke-width="1"/><circle cx="10.500" cy="9" r="2.200" fill="#c5c9cf"/><text x="13" y="24" font-family="Liberation Sans, sans-serif" font-weight="700" font-size="8" fill="#4a8ccb">2D</text></svg>
<svg class="a" style="left:2512px;top:222px" width="18" height="20" viewBox="0 0 18 20"><rect x="1" y="2" width="9" height="10" fill="#8cc063"/><rect x="10.500" y="2" width="1" height="10" fill="#6b7f8f"/><circle cx="10.800" cy="13.500" r="2.400" fill="#dfe2e6"/></svg>
<div class="a" style="left:2516px;top:206px;width:6px;height:2px;background:#4f5864"></div>
<div class="a" style="left:2516px;top:251px;width:6px;height:2px;background:#4f5864"></div>
<svg class="a" style="left:2526px;top:262px" width="8" height="8" viewBox="0 0 8 8"><path d="M0.5 0.5H7.500V2H0.5ZM0.5 3.200H7.500L4 7.500Z" fill="#dfe2e6"/></svg>
<svg class="a" style="left:84.0px;top:63.0px;opacity:.115;pointer-events:none" width="272" height="64" viewBox="0 0 272 64"><text transform="translate(2,0) scale(.67,1)" x="-0.15 60.6 128.8 202.4 255.1 282.7 339.9" y="54" font-family="Liberation Sans, sans-serif" font-weight="700" font-size="68.4" fill="#04060c" stroke="#04060c" stroke-width="9.5" stroke-miterlimit="2" vector-effect="non-scaling-stroke">DOMV.UK</text></svg>
<svg class="a" style="left:1097.0px;top:63.0px;opacity:.115;pointer-events:none" width="272" height="64" viewBox="0 0 272 64"><text transform="translate(2,0) scale(.67,1)" x="-0.15 60.6 128.8 202.4 255.1 282.7 339.9" y="54" font-family="Liberation Sans, sans-serif" font-weight="700" font-size="68.4" fill="#04060c" stroke="#04060c" stroke-width="9.5" stroke-miterlimit="2" vector-effect="non-scaling-stroke">DOMV.UK</text></svg>
<svg class="a" style="left:2047.5px;top:70.0px;opacity:.115;pointer-events:none" width="272" height="64" viewBox="0 0 272 64"><text transform="translate(2,0) scale(.67,1)" x="-0.15 60.6 128.8 202.4 255.1 282.7 339.9" y="54" font-family="Liberation Sans, sans-serif" font-weight="700" font-size="68.4" fill="#04060c" stroke="#04060c" stroke-width="9.5" stroke-miterlimit="2" vector-effect="non-scaling-stroke">DOMV.UK</text></svg>
<svg class="a" style="left:578.0px;top:294.0px;opacity:.115;pointer-events:none" width="272" height="64" viewBox="0 0 272 64"><text transform="translate(2,0) scale(.67,1)" x="-0.15 60.6 128.8 202.4 255.1 282.7 339.9" y="54" font-family="Liberation Sans, sans-serif" font-weight="700" font-size="68.4" fill="#04060c" stroke="#04060c" stroke-width="9.5" stroke-miterlimit="2" vector-effect="non-scaling-stroke">DOMV.UK</text></svg>
<svg class="a" style="left:1468.0px;top:313.0px;opacity:.115;pointer-events:none" width="272" height="64" viewBox="0 0 272 64"><text transform="translate(2,0) scale(.67,1)" x="-0.15 60.6 128.8 202.4 255.1 282.7 339.9" y="54" font-family="Liberation Sans, sans-serif" font-weight="700" font-size="68.4" fill="#04060c" stroke="#04060c" stroke-width="9.5" stroke-miterlimit="2" vector-effect="non-scaling-stroke">DOMV.UK</text></svg>
<svg class="a" style="left:78.0px;top:633.0px;opacity:.115;pointer-events:none" width="272" height="64" viewBox="0 0 272 64"><text transform="translate(2,0) scale(.67,1)" x="-0.15 60.6 128.8 202.4 255.1 282.7 339.9" y="54" font-family="Liberation Sans, sans-serif" font-weight="700" font-size="68.4" fill="#04060c" stroke="#04060c" stroke-width="9.5" stroke-miterlimit="2" vector-effect="non-scaling-stroke">DOMV.UK</text></svg>
<svg class="a" style="left:1079.0px;top:637.0px;opacity:.115;pointer-events:none" width="272" height="64" viewBox="0 0 272 64"><text transform="translate(2,0) scale(.67,1)" x="-0.15 60.6 128.8 202.4 255.1 282.7 339.9" y="54" font-family="Liberation Sans, sans-serif" font-weight="700" font-size="68.4" fill="#04060c" stroke="#04060c" stroke-width="9.5" stroke-miterlimit="2" vector-effect="non-scaling-stroke">DOMV.UK</text></svg>
<svg class="a" style="left:2105.5px;top:654.0px;opacity:.115;pointer-events:none" width="272" height="64" viewBox="0 0 272 64"><text transform="translate(2,0) scale(.67,1)" x="-0.15 60.6 128.8 202.4 255.1 282.7 339.9" y="54" font-family="Liberation Sans, sans-serif" font-weight="700" font-size="68.4" fill="#04060c" stroke="#04060c" stroke-width="9.5" stroke-miterlimit="2" vector-effect="non-scaling-stroke">DOMV.UK</text></svg>
<svg class="a" style="left:670.5px;top:994.0px;opacity:.115;pointer-events:none" width="272" height="64" viewBox="0 0 272 64"><text transform="translate(2,0) scale(.67,1)" x="-0.15 60.6 128.8 202.4 255.1 282.7 339.9" y="54" font-family="Liberation Sans, sans-serif" font-weight="700" font-size="68.4" fill="#04060c" stroke="#04060c" stroke-width="9.5" stroke-miterlimit="2" vector-effect="non-scaling-stroke">DOMV.UK</text></svg>
<svg class="a" style="left:1852.5px;top:992.5px;opacity:.115;pointer-events:none" width="272" height="64" viewBox="0 0 272 64"><text transform="translate(2,0) scale(.67,1)" x="-0.15 60.6 128.8 202.4 255.1 282.7 339.9" y="54" font-family="Liberation Sans, sans-serif" font-weight="700" font-size="68.4" fill="#04060c" stroke="#04060c" stroke-width="9.5" stroke-miterlimit="2" vector-effect="non-scaling-stroke">DOMV.UK</text></svg>
<svg class="a" style="left:40.0px;top:1234.0px;opacity:.115;pointer-events:none" width="272" height="64" viewBox="0 0 272 64"><text transform="translate(2,0) scale(.67,1)" x="-0.15 60.6 128.8 202.4 255.1 282.7 339.9" y="54" font-family="Liberation Sans, sans-serif" font-weight="700" font-size="68.4" fill="#04060c" stroke="#04060c" stroke-width="9.5" stroke-miterlimit="2" vector-effect="non-scaling-stroke">DOMV.UK</text></svg>
<svg class="a" style="left:1300.5px;top:1228.0px;opacity:.115;pointer-events:none" width="272" height="64" viewBox="0 0 272 64"><text transform="translate(2,0) scale(.67,1)" x="-0.15 60.6 128.8 202.4 255.1 282.7 339.9" y="54" font-family="Liberation Sans, sans-serif" font-weight="700" font-size="68.4" fill="#04060c" stroke="#04060c" stroke-width="9.5" stroke-miterlimit="2" vector-effect="non-scaling-stroke">DOMV.UK</text></svg>
<svg class="a" style="left:2192.5px;top:1247.0px;opacity:.115;pointer-events:none" width="272" height="64" viewBox="0 0 272 64"><text transform="translate(2,0) scale(.67,1)" x="-0.15 60.6 128.8 202.4 255.1 282.7 339.9" y="54" font-family="Liberation Sans, sans-serif" font-weight="700" font-size="68.4" fill="#04060c" stroke="#04060c" stroke-width="9.5" stroke-miterlimit="2" vector-effect="non-scaling-stroke">DOMV.UK</text></svg>
</body></html>
